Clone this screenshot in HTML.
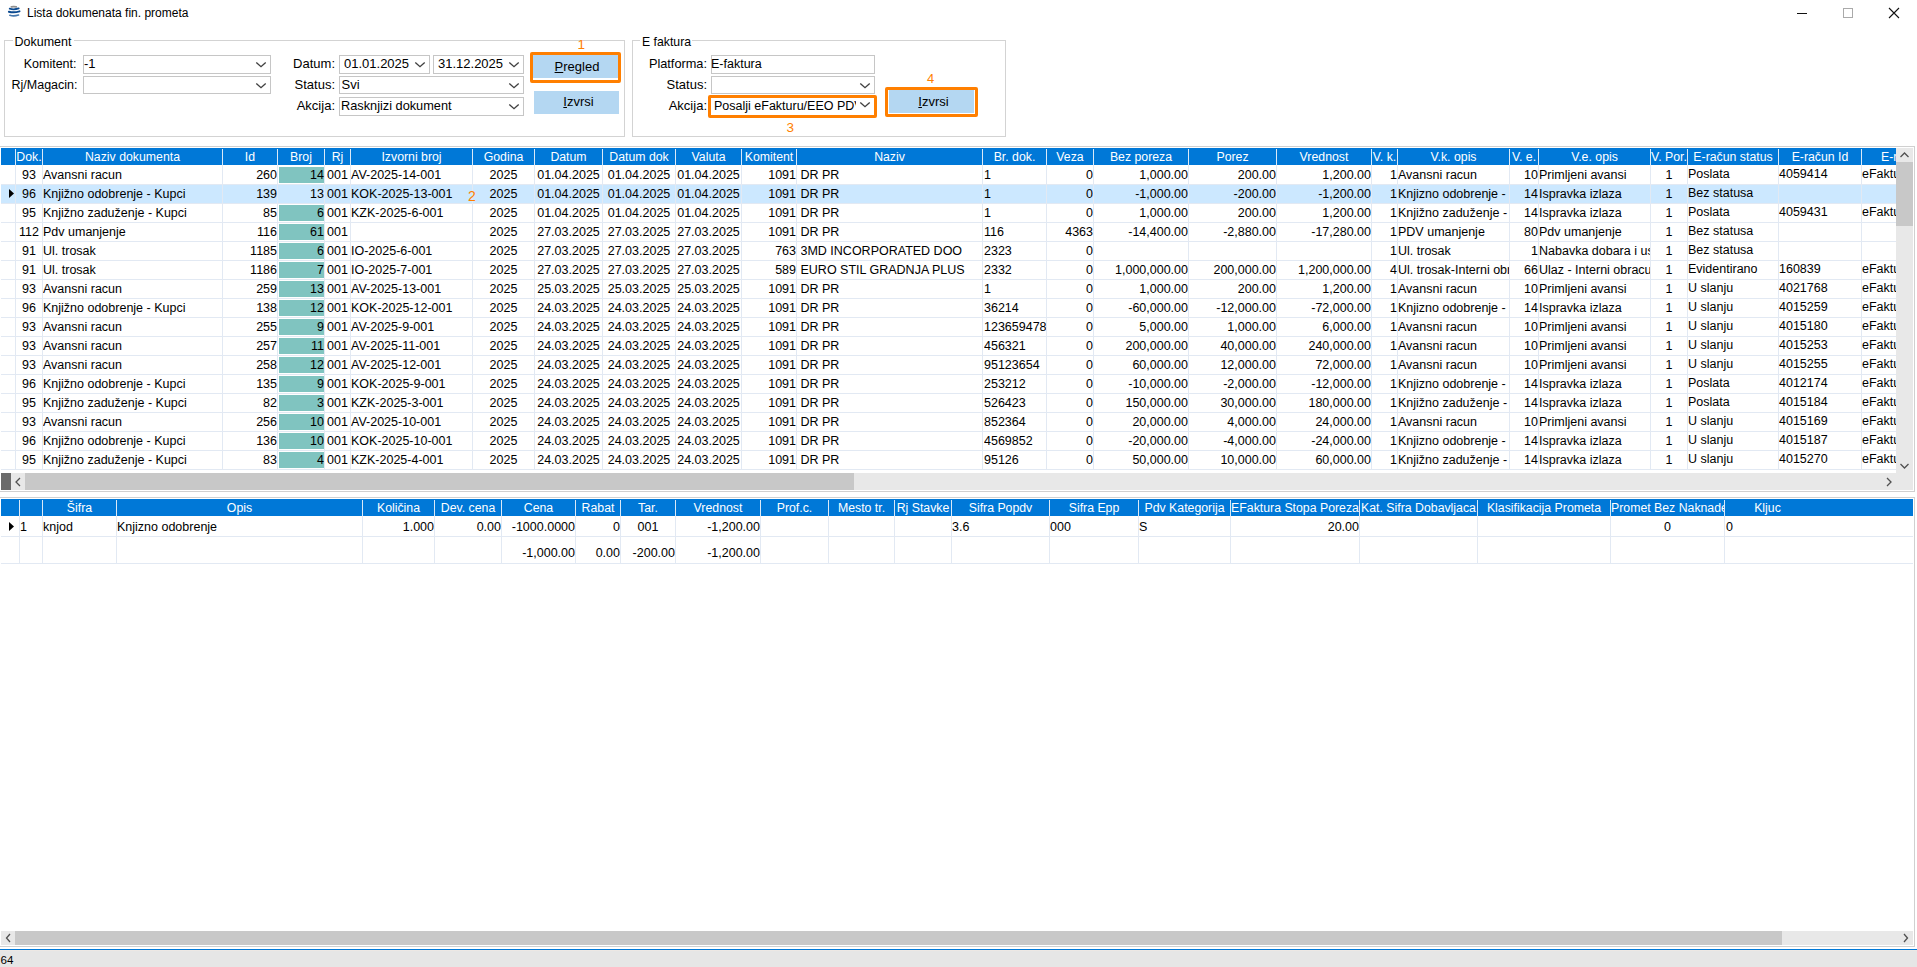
<!DOCTYPE html>
<html><head><meta charset="utf-8"><title>Lista dokumenata fin. prometa</title>
<style>
html,body{margin:0;padding:0;background:#fff;width:1917px;height:967px;overflow:hidden;}
body{position:relative;font-family:"Liberation Sans", sans-serif;font-size:12px;color:#000;}
body div, body svg{position:absolute;}
.t{white-space:nowrap;}
</style></head><body>
<svg style="left:7px;top:5px" width="14" height="14" viewBox="0 0 14 14"><path d="M4.3 1.9 Q6.7 1.4 9.3 1.9" stroke="#8f8f8f" stroke-width="1.6" fill="none" stroke-linecap="round"/><path d="M2.7 3.7 Q7 5.0 11.7 3.4" stroke="#0d4c92" stroke-width="1.8" fill="none" stroke-linecap="round"/><path d="M1.9 6.8 Q7 8.1 12.5 6.4" stroke="#0b4a90" stroke-width="2.0" fill="none" stroke-linecap="round"/><path d="M2.9 10.3 Q7 11.5 11.5 10.0" stroke="#4577ad" stroke-width="1.7" fill="none" stroke-linecap="round"/></svg>
<div class="t" style="left:27px;top:5.03px;font-size:12px;line-height:16px;color:#000;">Lista dokumenata fin. prometa</div>
<div style="left:1797px;top:13px;width:10px;height:1px;background:#111"></div>
<div style="left:1843px;top:8px;width:10px;height:10px;border:1px solid #aaa;box-sizing:border-box"></div>
<svg style="left:1888px;top:7px" width="12" height="12" viewBox="0 0 12 12"><path d="M1 1 L11 11 M11 1 L1 11" stroke="#111" stroke-width="1.1"/></svg>
<div style="left:4px;top:40px;width:621px;height:97px;border:1px solid #d3d3d3;box-sizing:border-box"></div>
<div style="left:12.5px;top:37px;width:61px;height:6px;background:#fff"></div>
<div class="t" style="left:14.5px;top:33.87px;font-size:12.5px;line-height:16px;color:#000;">Dokument</div>
<div style="left:632px;top:40px;width:374px;height:97px;border:1px solid #d3d3d3;box-sizing:border-box"></div>
<div style="left:640px;top:37px;width:52px;height:6px;background:#fff"></div>
<div class="t" style="left:642px;top:33.95px;font-size:12.25px;line-height:16px;color:#000;">E faktura</div>
<div class="t" style="left:-43.5px;top:55.87px;font-size:12.5px;line-height:16px;color:#000;width:120px;text-align:right;">Komitent:</div>
<div class="t" style="left:-42.5px;top:76.87px;font-size:12.5px;line-height:16px;color:#000;width:120px;text-align:right;">Rj/Magacin:</div>
<div style="left:83px;top:55px;width:188px;height:19px;border:1px solid #c6c6c6;box-sizing:border-box;background:#fff"></div>
<div class="t" style="left:84px;top:55.70px;font-size:13px;line-height:16px;color:#000;width:172px;overflow:hidden;white-space:nowrap">-1</div>
<svg style="left:255px;top:61px" width="12" height="8" viewBox="0 0 12 8"><path d="M1.3 1.4 L6 5.7 L10.7 1.4" fill="none" stroke="#404040" stroke-width="1.35"/></svg>
<div style="left:83px;top:76px;width:188px;height:18px;border:1px solid #c6c6c6;box-sizing:border-box;background:#fff"></div>
<svg style="left:255px;top:82px" width="12" height="8" viewBox="0 0 12 8"><path d="M1.3 1.4 L6 5.7 L10.7 1.4" fill="none" stroke="#404040" stroke-width="1.35"/></svg>
<div class="t" style="left:215px;top:55.70px;font-size:13px;line-height:16px;color:#000;width:120px;text-align:right;">Datum:</div>
<div class="t" style="left:215px;top:76.70px;font-size:13px;line-height:16px;color:#000;width:120px;text-align:right;">Status:</div>
<div class="t" style="left:215px;top:97.70px;font-size:13px;line-height:16px;color:#000;width:120px;text-align:right;">Akcija:</div>
<div style="left:339px;top:55px;width:91px;height:19px;border:1px solid #c6c6c6;box-sizing:border-box;background:#fff"></div>
<div class="t" style="left:344px;top:55.70px;font-size:13px;line-height:16px;color:#000;width:71px;overflow:hidden;white-space:nowrap">01.01.2025</div>
<svg style="left:414px;top:61px" width="12" height="8" viewBox="0 0 12 8"><path d="M1.3 1.4 L6 5.7 L10.7 1.4" fill="none" stroke="#404040" stroke-width="1.35"/></svg>
<div style="left:433px;top:55px;width:91px;height:19px;border:1px solid #c6c6c6;box-sizing:border-box;background:#fff"></div>
<div class="t" style="left:438px;top:55.70px;font-size:13px;line-height:16px;color:#000;width:71px;overflow:hidden;white-space:nowrap">31.12.2025</div>
<svg style="left:508px;top:61px" width="12" height="8" viewBox="0 0 12 8"><path d="M1.3 1.4 L6 5.7 L10.7 1.4" fill="none" stroke="#404040" stroke-width="1.35"/></svg>
<div style="left:339px;top:76px;width:185px;height:18px;border:1px solid #c6c6c6;box-sizing:border-box;background:#fff"></div>
<div class="t" style="left:341.5px;top:76.70px;font-size:13px;line-height:16px;color:#000;width:167.5px;overflow:hidden;white-space:nowrap">Svi</div>
<svg style="left:508px;top:82px" width="12" height="8" viewBox="0 0 12 8"><path d="M1.3 1.4 L6 5.7 L10.7 1.4" fill="none" stroke="#404040" stroke-width="1.35"/></svg>
<div style="left:339px;top:97px;width:185px;height:19px;border:1px solid #c6c6c6;box-sizing:border-box;background:#fff"></div>
<div class="t" style="left:341px;top:97.79px;font-size:12.75px;line-height:16px;color:#000;width:168px;overflow:hidden;white-space:nowrap">Rasknjizi dokument</div>
<svg style="left:508px;top:103px" width="12" height="8" viewBox="0 0 12 8"><path d="M1.3 1.4 L6 5.7 L10.7 1.4" fill="none" stroke="#404040" stroke-width="1.35"/></svg>
<div style="left:530px;top:52px;width:91px;height:31px;border:3px solid #ff7f00;border-radius:2px;box-sizing:border-box;background:#fff"></div>
<div style="left:533px;top:55px;width:85px;height:23px;background:#b4d7f2"></div>
<div class="t" style="left:534.5px;top:58.70px;font-size:13px;line-height:16px;color:#000;width:85px;text-align:center;"><u>P</u>regled</div>
<div class="t" style="left:577.5px;top:36.54px;font-size:13.5px;line-height:16px;color:#ff7f00;">1</div>
<div style="left:534px;top:91px;width:85px;height:23px;background:#b4d7f2"></div>
<div class="t" style="left:536px;top:93.70px;font-size:13px;line-height:16px;color:#000;width:85px;text-align:center;"><u>I</u>zvrsi</div>
<div class="t" style="left:587px;top:55.79px;font-size:12.75px;line-height:16px;color:#000;width:120px;text-align:right;">Platforma:</div>
<div class="t" style="left:587px;top:76.70px;font-size:13px;line-height:16px;color:#000;width:120px;text-align:right;">Status:</div>
<div class="t" style="left:587px;top:97.70px;font-size:13px;line-height:16px;color:#000;width:120px;text-align:right;">Akcija:</div>
<div style="left:711px;top:55px;width:164px;height:19px;border:1px solid #c6c6c6;box-sizing:border-box;background:#fff"></div>
<div class="t" style="left:711px;top:55.87px;font-size:12.5px;line-height:16px;color:#000;width:149px;overflow:hidden;white-space:nowrap">E-faktura</div>
<div style="left:711px;top:76px;width:164px;height:18px;border:1px solid #c6c6c6;box-sizing:border-box;background:#fff"></div>
<svg style="left:859px;top:82px" width="12" height="8" viewBox="0 0 12 8"><path d="M1.3 1.4 L6 5.7 L10.7 1.4" fill="none" stroke="#404040" stroke-width="1.35"/></svg>
<div style="left:708px;top:95px;width:169px;height:23px;border:3px solid #ff7f00;border-radius:2px;box-sizing:border-box;background:#fff"></div>
<div class="t" style="left:714px;top:97.87px;font-size:12.5px;line-height:16px;color:#000;width:142px;overflow:hidden;white-space:nowrap">Posalji eFakturu/EEO PDV</div>
<svg style="left:859px;top:101px" width="12" height="8" viewBox="0 0 12 8"><path d="M1.3 1.4 L6 5.7 L10.7 1.4" fill="none" stroke="#404040" stroke-width="1.35"/></svg>
<div class="t" style="left:786.5px;top:119.54px;font-size:13.5px;line-height:16px;color:#ff7f00;">3</div>
<div style="left:885px;top:87px;width:93px;height:30px;border:3px solid #ff7f00;border-radius:2px;box-sizing:border-box;background:#fff"></div>
<div style="left:889px;top:90px;width:85px;height:23px;background:#b4d7f2"></div>
<div class="t" style="left:891px;top:93.70px;font-size:13px;line-height:16px;color:#000;width:85px;text-align:center;"><u>I</u>zvrsi</div>
<div class="t" style="left:927px;top:70.70px;font-size:13px;line-height:16px;color:#ff7f00;">4</div>
<div style="left:0px;top:146px;width:1915px;height:1px;background:#d0d0d0"></div>
<div style="left:1914px;top:146px;width:1px;height:346px;background:#d0d0d0"></div>
<div style="left:0px;top:491px;width:1915px;height:1px;background:#d0d0d0"></div>
<div style="left:1px;top:148px;width:1895px;height:322px;overflow:hidden">
<div style="left:0px;top:0px;width:1960px;height:17px;background:#0078d7"></div>
<div style="left:14px;top:1px;width:1px;height:16px;background:#dbe9f7"></div>
<div style="left:41px;top:1px;width:1px;height:16px;background:#dbe9f7"></div>
<div style="left:221px;top:1px;width:1px;height:16px;background:#dbe9f7"></div>
<div style="left:276px;top:1px;width:1px;height:16px;background:#dbe9f7"></div>
<div style="left:323px;top:1px;width:1px;height:16px;background:#dbe9f7"></div>
<div style="left:349px;top:1px;width:1px;height:16px;background:#dbe9f7"></div>
<div style="left:471px;top:1px;width:1px;height:16px;background:#dbe9f7"></div>
<div style="left:533px;top:1px;width:1px;height:16px;background:#dbe9f7"></div>
<div style="left:601px;top:1px;width:1px;height:16px;background:#dbe9f7"></div>
<div style="left:674px;top:1px;width:1px;height:16px;background:#dbe9f7"></div>
<div style="left:740px;top:1px;width:1px;height:16px;background:#dbe9f7"></div>
<div style="left:795px;top:1px;width:1px;height:16px;background:#dbe9f7"></div>
<div style="left:981px;top:1px;width:1px;height:16px;background:#dbe9f7"></div>
<div style="left:1045px;top:1px;width:1px;height:16px;background:#dbe9f7"></div>
<div style="left:1092px;top:1px;width:1px;height:16px;background:#dbe9f7"></div>
<div style="left:1187px;top:1px;width:1px;height:16px;background:#dbe9f7"></div>
<div style="left:1275px;top:1px;width:1px;height:16px;background:#dbe9f7"></div>
<div style="left:1370px;top:1px;width:1px;height:16px;background:#dbe9f7"></div>
<div style="left:1396px;top:1px;width:1px;height:16px;background:#dbe9f7"></div>
<div style="left:1508px;top:1px;width:1px;height:16px;background:#dbe9f7"></div>
<div style="left:1537px;top:1px;width:1px;height:16px;background:#dbe9f7"></div>
<div style="left:1649px;top:1px;width:1px;height:16px;background:#dbe9f7"></div>
<div style="left:1686px;top:1px;width:1px;height:16px;background:#dbe9f7"></div>
<div style="left:1777px;top:1px;width:1px;height:16px;background:#dbe9f7"></div>
<div style="left:1860px;top:1px;width:1px;height:16px;background:#dbe9f7"></div>
<div class="t" style="left:15px;top:0.93px;width:26px;font-size:12.3px;line-height:16px;color:#fff;text-align:center;overflow:hidden;white-space:nowrap;">Dok.</div>
<div class="t" style="left:42px;top:0.93px;width:179px;font-size:12.3px;line-height:16px;color:#fff;text-align:center;overflow:hidden;white-space:nowrap;">Naziv dokumenta</div>
<div class="t" style="left:222px;top:0.93px;width:54px;font-size:12.3px;line-height:16px;color:#fff;text-align:center;overflow:hidden;white-space:nowrap;">Id</div>
<div class="t" style="left:277px;top:0.93px;width:46px;font-size:12.3px;line-height:16px;color:#fff;text-align:center;overflow:hidden;white-space:nowrap;">Broj</div>
<div class="t" style="left:324px;top:0.93px;width:25px;font-size:12.3px;line-height:16px;color:#fff;text-align:center;overflow:hidden;white-space:nowrap;">Rj</div>
<div class="t" style="left:350px;top:0.93px;width:121px;font-size:12.3px;line-height:16px;color:#fff;text-align:center;overflow:hidden;white-space:nowrap;">Izvorni broj</div>
<div class="t" style="left:472px;top:0.93px;width:61px;font-size:12.3px;line-height:16px;color:#fff;text-align:center;overflow:hidden;white-space:nowrap;">Godina</div>
<div class="t" style="left:534px;top:0.93px;width:67px;font-size:12.3px;line-height:16px;color:#fff;text-align:center;overflow:hidden;white-space:nowrap;">Datum</div>
<div class="t" style="left:602px;top:0.93px;width:72px;font-size:12.3px;line-height:16px;color:#fff;text-align:center;overflow:hidden;white-space:nowrap;">Datum dok</div>
<div class="t" style="left:675px;top:0.93px;width:65px;font-size:12.3px;line-height:16px;color:#fff;text-align:center;overflow:hidden;white-space:nowrap;">Valuta</div>
<div class="t" style="left:741px;top:0.93px;width:54px;font-size:12.3px;line-height:16px;color:#fff;text-align:center;overflow:hidden;white-space:nowrap;">Komitent</div>
<div class="t" style="left:796px;top:0.93px;width:185px;font-size:12.3px;line-height:16px;color:#fff;text-align:center;overflow:hidden;white-space:nowrap;">Naziv</div>
<div class="t" style="left:982px;top:0.93px;width:63px;font-size:12.3px;line-height:16px;color:#fff;text-align:center;overflow:hidden;white-space:nowrap;">Br. dok.</div>
<div class="t" style="left:1046px;top:0.93px;width:46px;font-size:12.3px;line-height:16px;color:#fff;text-align:center;overflow:hidden;white-space:nowrap;">Veza</div>
<div class="t" style="left:1093px;top:0.93px;width:94px;font-size:12.3px;line-height:16px;color:#fff;text-align:center;overflow:hidden;white-space:nowrap;">Bez poreza</div>
<div class="t" style="left:1188px;top:0.93px;width:87px;font-size:12.3px;line-height:16px;color:#fff;text-align:center;overflow:hidden;white-space:nowrap;">Porez</div>
<div class="t" style="left:1276px;top:0.93px;width:94px;font-size:12.3px;line-height:16px;color:#fff;text-align:center;overflow:hidden;white-space:nowrap;">Vrednost</div>
<div class="t" style="left:1371px;top:0.93px;width:25px;font-size:12.3px;line-height:16px;color:#fff;text-align:center;overflow:hidden;white-space:nowrap;">V. k.</div>
<div class="t" style="left:1397px;top:0.93px;width:111px;font-size:12.3px;line-height:16px;color:#fff;text-align:center;overflow:hidden;white-space:nowrap;">V.k. opis</div>
<div class="t" style="left:1509px;top:0.93px;width:28px;font-size:12.3px;line-height:16px;color:#fff;text-align:center;overflow:hidden;white-space:nowrap;">V. e.</div>
<div class="t" style="left:1538px;top:0.93px;width:111px;font-size:12.3px;line-height:16px;color:#fff;text-align:center;overflow:hidden;white-space:nowrap;">V.e. opis</div>
<div class="t" style="left:1650px;top:0.93px;width:36px;font-size:12.3px;line-height:16px;color:#fff;text-align:center;overflow:hidden;white-space:nowrap;">V. Por.</div>
<div class="t" style="left:1687px;top:0.93px;width:90px;font-size:12.3px;line-height:16px;color:#fff;text-align:center;overflow:hidden;white-space:nowrap;">E-račun status</div>
<div class="t" style="left:1778px;top:0.93px;width:82px;font-size:12.3px;line-height:16px;color:#fff;text-align:center;overflow:hidden;white-space:nowrap;">E-račun Id</div>
<div class="t" style="left:1880px;top:0.93px;width:200px;font-size:12.3px;line-height:16px;color:#fff;text-align:left;overflow:hidden;white-space:nowrap;">E-račun tip</div>
<div style="left:0px;top:36px;width:1960px;height:1px;background:#e2e9f3"></div>
<div class="t" style="left:15px;top:18.87px;width:26px;font-size:12.5px;line-height:16px;color:#000;text-align:center;overflow:hidden;white-space:nowrap;">93</div>
<div class="t" style="left:42px;top:18.87px;width:179px;font-size:12.5px;line-height:16px;color:#000;text-align:left;overflow:hidden;white-space:nowrap;">Avansni racun</div>
<div class="t" style="left:222px;top:18.87px;width:54px;font-size:12.5px;line-height:16px;color:#000;text-align:right;overflow:hidden;white-space:nowrap;">260</div>
<div style="left:278px;top:19px;width:45px;height:16px;background:#80c4c0"></div>
<div class="t" style="left:277px;top:18.87px;width:46px;font-size:12.5px;line-height:16px;color:#000;text-align:right;overflow:hidden;white-space:nowrap;">14</div>
<div class="t" style="left:324px;top:18.87px;width:25px;font-size:12.5px;line-height:16px;color:#000;text-align:center;overflow:hidden;white-space:nowrap;">001</div>
<div class="t" style="left:350px;top:18.87px;width:121px;font-size:12.5px;line-height:16px;color:#000;text-align:left;overflow:hidden;white-space:nowrap;">AV-2025-14-001</div>
<div class="t" style="left:472px;top:18.87px;width:61px;font-size:12.5px;line-height:16px;color:#000;text-align:center;overflow:hidden;white-space:nowrap;">2025</div>
<div class="t" style="left:534px;top:18.87px;width:67px;font-size:12.5px;line-height:16px;color:#000;text-align:center;overflow:hidden;white-space:nowrap;">01.04.2025</div>
<div class="t" style="left:602px;top:18.87px;width:72px;font-size:12.5px;line-height:16px;color:#000;text-align:center;overflow:hidden;white-space:nowrap;">01.04.2025</div>
<div class="t" style="left:675px;top:18.87px;width:65px;font-size:12.5px;line-height:16px;color:#000;text-align:center;overflow:hidden;white-space:nowrap;">01.04.2025</div>
<div class="t" style="left:741px;top:18.87px;width:54px;font-size:12.5px;line-height:16px;color:#000;text-align:right;overflow:hidden;white-space:nowrap;">1091</div>
<div class="t" style="left:799.5px;top:18.87px;width:181.5px;font-size:12.5px;line-height:16px;color:#000;text-align:left;overflow:hidden;white-space:nowrap;">DR PR</div>
<div class="t" style="left:983px;top:18.87px;width:62px;font-size:12.5px;line-height:16px;color:#000;text-align:left;overflow:hidden;white-space:nowrap;">1</div>
<div class="t" style="left:1046px;top:18.87px;width:46px;font-size:12.5px;line-height:16px;color:#000;text-align:right;overflow:hidden;white-space:nowrap;">0</div>
<div class="t" style="left:1093px;top:18.87px;width:94px;font-size:12.5px;line-height:16px;color:#000;text-align:right;overflow:hidden;white-space:nowrap;">1,000.00</div>
<div class="t" style="left:1188px;top:18.87px;width:87px;font-size:12.5px;line-height:16px;color:#000;text-align:right;overflow:hidden;white-space:nowrap;">200.00</div>
<div class="t" style="left:1276px;top:18.87px;width:94px;font-size:12.5px;line-height:16px;color:#000;text-align:right;overflow:hidden;white-space:nowrap;">1,200.00</div>
<div class="t" style="left:1371px;top:18.87px;width:25px;font-size:12.5px;line-height:16px;color:#000;text-align:right;overflow:hidden;white-space:nowrap;">1</div>
<div class="t" style="left:1397px;top:18.87px;width:111px;font-size:12.5px;line-height:16px;color:#000;text-align:left;overflow:hidden;white-space:nowrap;">Avansni racun</div>
<div class="t" style="left:1509px;top:18.87px;width:28px;font-size:12.5px;line-height:16px;color:#000;text-align:right;overflow:hidden;white-space:nowrap;">10</div>
<div class="t" style="left:1538px;top:18.87px;width:111px;font-size:12.5px;line-height:16px;color:#000;text-align:left;overflow:hidden;white-space:nowrap;">Primljeni avansi</div>
<div class="t" style="left:1650px;top:18.87px;width:36px;font-size:12.5px;line-height:16px;color:#000;text-align:center;overflow:hidden;white-space:nowrap;">1</div>
<div class="t" style="left:1687px;top:17.87px;width:90px;font-size:12.5px;line-height:16px;color:#000;text-align:left;overflow:hidden;white-space:nowrap;">Poslata</div>
<div class="t" style="left:1778px;top:17.87px;width:82px;font-size:12.5px;line-height:16px;color:#000;text-align:left;overflow:hidden;white-space:nowrap;">4059414</div>
<div class="t" style="left:1861px;top:17.87px;width:98px;font-size:12.5px;line-height:16px;color:#000;text-align:left;overflow:hidden;white-space:nowrap;">eFaktura</div>
<div style="left:0px;top:37px;width:1960px;height:18px;background:#cce8ff"></div>
<div style="left:0px;top:55px;width:1960px;height:1px;background:#e2e9f3"></div>
<div class="t" style="left:15px;top:37.87px;width:26px;font-size:12.5px;line-height:16px;color:#000;text-align:center;overflow:hidden;white-space:nowrap;">96</div>
<div class="t" style="left:42px;top:37.87px;width:179px;font-size:12.5px;line-height:16px;color:#000;text-align:left;overflow:hidden;white-space:nowrap;">Knjižno odobrenje - Kupci</div>
<div class="t" style="left:222px;top:37.87px;width:54px;font-size:12.5px;line-height:16px;color:#000;text-align:right;overflow:hidden;white-space:nowrap;">139</div>
<div class="t" style="left:277px;top:37.87px;width:46px;font-size:12.5px;line-height:16px;color:#000;text-align:right;overflow:hidden;white-space:nowrap;">13</div>
<div class="t" style="left:324px;top:37.87px;width:25px;font-size:12.5px;line-height:16px;color:#000;text-align:center;overflow:hidden;white-space:nowrap;">001</div>
<div class="t" style="left:350px;top:37.87px;width:121px;font-size:12.5px;line-height:16px;color:#000;text-align:left;overflow:hidden;white-space:nowrap;">KOK-2025-13-001</div>
<div class="t" style="left:472px;top:37.87px;width:61px;font-size:12.5px;line-height:16px;color:#000;text-align:center;overflow:hidden;white-space:nowrap;">2025</div>
<div class="t" style="left:534px;top:37.87px;width:67px;font-size:12.5px;line-height:16px;color:#000;text-align:center;overflow:hidden;white-space:nowrap;">01.04.2025</div>
<div class="t" style="left:602px;top:37.87px;width:72px;font-size:12.5px;line-height:16px;color:#000;text-align:center;overflow:hidden;white-space:nowrap;">01.04.2025</div>
<div class="t" style="left:675px;top:37.87px;width:65px;font-size:12.5px;line-height:16px;color:#000;text-align:center;overflow:hidden;white-space:nowrap;">01.04.2025</div>
<div class="t" style="left:741px;top:37.87px;width:54px;font-size:12.5px;line-height:16px;color:#000;text-align:right;overflow:hidden;white-space:nowrap;">1091</div>
<div class="t" style="left:799.5px;top:37.87px;width:181.5px;font-size:12.5px;line-height:16px;color:#000;text-align:left;overflow:hidden;white-space:nowrap;">DR PR</div>
<div class="t" style="left:983px;top:37.87px;width:62px;font-size:12.5px;line-height:16px;color:#000;text-align:left;overflow:hidden;white-space:nowrap;">1</div>
<div class="t" style="left:1046px;top:37.87px;width:46px;font-size:12.5px;line-height:16px;color:#000;text-align:right;overflow:hidden;white-space:nowrap;">0</div>
<div class="t" style="left:1093px;top:37.87px;width:94px;font-size:12.5px;line-height:16px;color:#000;text-align:right;overflow:hidden;white-space:nowrap;">-1,000.00</div>
<div class="t" style="left:1188px;top:37.87px;width:87px;font-size:12.5px;line-height:16px;color:#000;text-align:right;overflow:hidden;white-space:nowrap;">-200.00</div>
<div class="t" style="left:1276px;top:37.87px;width:94px;font-size:12.5px;line-height:16px;color:#000;text-align:right;overflow:hidden;white-space:nowrap;">-1,200.00</div>
<div class="t" style="left:1371px;top:37.87px;width:25px;font-size:12.5px;line-height:16px;color:#000;text-align:right;overflow:hidden;white-space:nowrap;">1</div>
<div class="t" style="left:1397px;top:37.87px;width:111px;font-size:12.5px;line-height:16px;color:#000;text-align:left;overflow:hidden;white-space:nowrap;">Knjizno odobrenje - Kupci</div>
<div class="t" style="left:1509px;top:37.87px;width:28px;font-size:12.5px;line-height:16px;color:#000;text-align:right;overflow:hidden;white-space:nowrap;">14</div>
<div class="t" style="left:1538px;top:37.87px;width:111px;font-size:12.5px;line-height:16px;color:#000;text-align:left;overflow:hidden;white-space:nowrap;">Ispravka izlaza</div>
<div class="t" style="left:1650px;top:37.87px;width:36px;font-size:12.5px;line-height:16px;color:#000;text-align:center;overflow:hidden;white-space:nowrap;">1</div>
<div class="t" style="left:1687px;top:36.87px;width:90px;font-size:12.5px;line-height:16px;color:#000;text-align:left;overflow:hidden;white-space:nowrap;">Bez statusa</div>
<svg style="left:8px;top:41px" width="6" height="10" viewBox="0 0 6 10"><path d="M0 0 L5 4.5 L0 9 Z" fill="#000"/></svg>
<div style="left:0px;top:74px;width:1960px;height:1px;background:#e2e9f3"></div>
<div class="t" style="left:15px;top:56.87px;width:26px;font-size:12.5px;line-height:16px;color:#000;text-align:center;overflow:hidden;white-space:nowrap;">95</div>
<div class="t" style="left:42px;top:56.87px;width:179px;font-size:12.5px;line-height:16px;color:#000;text-align:left;overflow:hidden;white-space:nowrap;">Knjižno zaduženje - Kupci</div>
<div class="t" style="left:222px;top:56.87px;width:54px;font-size:12.5px;line-height:16px;color:#000;text-align:right;overflow:hidden;white-space:nowrap;">85</div>
<div style="left:278px;top:57px;width:45px;height:16px;background:#80c4c0"></div>
<div class="t" style="left:277px;top:56.87px;width:46px;font-size:12.5px;line-height:16px;color:#000;text-align:right;overflow:hidden;white-space:nowrap;">6</div>
<div class="t" style="left:324px;top:56.87px;width:25px;font-size:12.5px;line-height:16px;color:#000;text-align:center;overflow:hidden;white-space:nowrap;">001</div>
<div class="t" style="left:350px;top:56.87px;width:121px;font-size:12.5px;line-height:16px;color:#000;text-align:left;overflow:hidden;white-space:nowrap;">KZK-2025-6-001</div>
<div class="t" style="left:472px;top:56.87px;width:61px;font-size:12.5px;line-height:16px;color:#000;text-align:center;overflow:hidden;white-space:nowrap;">2025</div>
<div class="t" style="left:534px;top:56.87px;width:67px;font-size:12.5px;line-height:16px;color:#000;text-align:center;overflow:hidden;white-space:nowrap;">01.04.2025</div>
<div class="t" style="left:602px;top:56.87px;width:72px;font-size:12.5px;line-height:16px;color:#000;text-align:center;overflow:hidden;white-space:nowrap;">01.04.2025</div>
<div class="t" style="left:675px;top:56.87px;width:65px;font-size:12.5px;line-height:16px;color:#000;text-align:center;overflow:hidden;white-space:nowrap;">01.04.2025</div>
<div class="t" style="left:741px;top:56.87px;width:54px;font-size:12.5px;line-height:16px;color:#000;text-align:right;overflow:hidden;white-space:nowrap;">1091</div>
<div class="t" style="left:799.5px;top:56.87px;width:181.5px;font-size:12.5px;line-height:16px;color:#000;text-align:left;overflow:hidden;white-space:nowrap;">DR PR</div>
<div class="t" style="left:983px;top:56.87px;width:62px;font-size:12.5px;line-height:16px;color:#000;text-align:left;overflow:hidden;white-space:nowrap;">1</div>
<div class="t" style="left:1046px;top:56.87px;width:46px;font-size:12.5px;line-height:16px;color:#000;text-align:right;overflow:hidden;white-space:nowrap;">0</div>
<div class="t" style="left:1093px;top:56.87px;width:94px;font-size:12.5px;line-height:16px;color:#000;text-align:right;overflow:hidden;white-space:nowrap;">1,000.00</div>
<div class="t" style="left:1188px;top:56.87px;width:87px;font-size:12.5px;line-height:16px;color:#000;text-align:right;overflow:hidden;white-space:nowrap;">200.00</div>
<div class="t" style="left:1276px;top:56.87px;width:94px;font-size:12.5px;line-height:16px;color:#000;text-align:right;overflow:hidden;white-space:nowrap;">1,200.00</div>
<div class="t" style="left:1371px;top:56.87px;width:25px;font-size:12.5px;line-height:16px;color:#000;text-align:right;overflow:hidden;white-space:nowrap;">1</div>
<div class="t" style="left:1397px;top:56.87px;width:111px;font-size:12.5px;line-height:16px;color:#000;text-align:left;overflow:hidden;white-space:nowrap;">Knjižno zaduženje - Kupci</div>
<div class="t" style="left:1509px;top:56.87px;width:28px;font-size:12.5px;line-height:16px;color:#000;text-align:right;overflow:hidden;white-space:nowrap;">14</div>
<div class="t" style="left:1538px;top:56.87px;width:111px;font-size:12.5px;line-height:16px;color:#000;text-align:left;overflow:hidden;white-space:nowrap;">Ispravka izlaza</div>
<div class="t" style="left:1650px;top:56.87px;width:36px;font-size:12.5px;line-height:16px;color:#000;text-align:center;overflow:hidden;white-space:nowrap;">1</div>
<div class="t" style="left:1687px;top:55.87px;width:90px;font-size:12.5px;line-height:16px;color:#000;text-align:left;overflow:hidden;white-space:nowrap;">Poslata</div>
<div class="t" style="left:1778px;top:55.87px;width:82px;font-size:12.5px;line-height:16px;color:#000;text-align:left;overflow:hidden;white-space:nowrap;">4059431</div>
<div class="t" style="left:1861px;top:55.87px;width:98px;font-size:12.5px;line-height:16px;color:#000;text-align:left;overflow:hidden;white-space:nowrap;">eFaktura</div>
<div style="left:0px;top:93px;width:1960px;height:1px;background:#e2e9f3"></div>
<div class="t" style="left:15px;top:75.87px;width:26px;font-size:12.5px;line-height:16px;color:#000;text-align:center;overflow:hidden;white-space:nowrap;">112</div>
<div class="t" style="left:42px;top:75.87px;width:179px;font-size:12.5px;line-height:16px;color:#000;text-align:left;overflow:hidden;white-space:nowrap;">Pdv umanjenje</div>
<div class="t" style="left:222px;top:75.87px;width:54px;font-size:12.5px;line-height:16px;color:#000;text-align:right;overflow:hidden;white-space:nowrap;">116</div>
<div style="left:278px;top:76px;width:45px;height:16px;background:#80c4c0"></div>
<div class="t" style="left:277px;top:75.87px;width:46px;font-size:12.5px;line-height:16px;color:#000;text-align:right;overflow:hidden;white-space:nowrap;">61</div>
<div class="t" style="left:324px;top:75.87px;width:25px;font-size:12.5px;line-height:16px;color:#000;text-align:center;overflow:hidden;white-space:nowrap;">001</div>
<div class="t" style="left:472px;top:75.87px;width:61px;font-size:12.5px;line-height:16px;color:#000;text-align:center;overflow:hidden;white-space:nowrap;">2025</div>
<div class="t" style="left:534px;top:75.87px;width:67px;font-size:12.5px;line-height:16px;color:#000;text-align:center;overflow:hidden;white-space:nowrap;">27.03.2025</div>
<div class="t" style="left:602px;top:75.87px;width:72px;font-size:12.5px;line-height:16px;color:#000;text-align:center;overflow:hidden;white-space:nowrap;">27.03.2025</div>
<div class="t" style="left:675px;top:75.87px;width:65px;font-size:12.5px;line-height:16px;color:#000;text-align:center;overflow:hidden;white-space:nowrap;">27.03.2025</div>
<div class="t" style="left:741px;top:75.87px;width:54px;font-size:12.5px;line-height:16px;color:#000;text-align:right;overflow:hidden;white-space:nowrap;">1091</div>
<div class="t" style="left:799.5px;top:75.87px;width:181.5px;font-size:12.5px;line-height:16px;color:#000;text-align:left;overflow:hidden;white-space:nowrap;">DR PR</div>
<div class="t" style="left:983px;top:75.87px;width:62px;font-size:12.5px;line-height:16px;color:#000;text-align:left;overflow:hidden;white-space:nowrap;">116</div>
<div class="t" style="left:1046px;top:75.87px;width:46px;font-size:12.5px;line-height:16px;color:#000;text-align:right;overflow:hidden;white-space:nowrap;">4363</div>
<div class="t" style="left:1093px;top:75.87px;width:94px;font-size:12.5px;line-height:16px;color:#000;text-align:right;overflow:hidden;white-space:nowrap;">-14,400.00</div>
<div class="t" style="left:1188px;top:75.87px;width:87px;font-size:12.5px;line-height:16px;color:#000;text-align:right;overflow:hidden;white-space:nowrap;">-2,880.00</div>
<div class="t" style="left:1276px;top:75.87px;width:94px;font-size:12.5px;line-height:16px;color:#000;text-align:right;overflow:hidden;white-space:nowrap;">-17,280.00</div>
<div class="t" style="left:1371px;top:75.87px;width:25px;font-size:12.5px;line-height:16px;color:#000;text-align:right;overflow:hidden;white-space:nowrap;">1</div>
<div class="t" style="left:1397px;top:75.87px;width:111px;font-size:12.5px;line-height:16px;color:#000;text-align:left;overflow:hidden;white-space:nowrap;">PDV umanjenje</div>
<div class="t" style="left:1509px;top:75.87px;width:28px;font-size:12.5px;line-height:16px;color:#000;text-align:right;overflow:hidden;white-space:nowrap;">80</div>
<div class="t" style="left:1538px;top:75.87px;width:111px;font-size:12.5px;line-height:16px;color:#000;text-align:left;overflow:hidden;white-space:nowrap;">Pdv umanjenje</div>
<div class="t" style="left:1650px;top:75.87px;width:36px;font-size:12.5px;line-height:16px;color:#000;text-align:center;overflow:hidden;white-space:nowrap;">1</div>
<div class="t" style="left:1687px;top:74.87px;width:90px;font-size:12.5px;line-height:16px;color:#000;text-align:left;overflow:hidden;white-space:nowrap;">Bez statusa</div>
<div style="left:0px;top:112px;width:1960px;height:1px;background:#e2e9f3"></div>
<div class="t" style="left:15px;top:94.87px;width:26px;font-size:12.5px;line-height:16px;color:#000;text-align:center;overflow:hidden;white-space:nowrap;">91</div>
<div class="t" style="left:42px;top:94.87px;width:179px;font-size:12.5px;line-height:16px;color:#000;text-align:left;overflow:hidden;white-space:nowrap;">Ul. trosak</div>
<div class="t" style="left:222px;top:94.87px;width:54px;font-size:12.5px;line-height:16px;color:#000;text-align:right;overflow:hidden;white-space:nowrap;">1185</div>
<div style="left:278px;top:95px;width:45px;height:16px;background:#80c4c0"></div>
<div class="t" style="left:277px;top:94.87px;width:46px;font-size:12.5px;line-height:16px;color:#000;text-align:right;overflow:hidden;white-space:nowrap;">6</div>
<div class="t" style="left:324px;top:94.87px;width:25px;font-size:12.5px;line-height:16px;color:#000;text-align:center;overflow:hidden;white-space:nowrap;">001</div>
<div class="t" style="left:350px;top:94.87px;width:121px;font-size:12.5px;line-height:16px;color:#000;text-align:left;overflow:hidden;white-space:nowrap;">IO-2025-6-001</div>
<div class="t" style="left:472px;top:94.87px;width:61px;font-size:12.5px;line-height:16px;color:#000;text-align:center;overflow:hidden;white-space:nowrap;">2025</div>
<div class="t" style="left:534px;top:94.87px;width:67px;font-size:12.5px;line-height:16px;color:#000;text-align:center;overflow:hidden;white-space:nowrap;">27.03.2025</div>
<div class="t" style="left:602px;top:94.87px;width:72px;font-size:12.5px;line-height:16px;color:#000;text-align:center;overflow:hidden;white-space:nowrap;">27.03.2025</div>
<div class="t" style="left:675px;top:94.87px;width:65px;font-size:12.5px;line-height:16px;color:#000;text-align:center;overflow:hidden;white-space:nowrap;">27.03.2025</div>
<div class="t" style="left:741px;top:94.87px;width:54px;font-size:12.5px;line-height:16px;color:#000;text-align:right;overflow:hidden;white-space:nowrap;">763</div>
<div class="t" style="left:799.5px;top:94.87px;width:181.5px;font-size:12.5px;line-height:16px;color:#000;text-align:left;overflow:hidden;white-space:nowrap;">3MD INCORPORATED DOO</div>
<div class="t" style="left:983px;top:94.87px;width:62px;font-size:12.5px;line-height:16px;color:#000;text-align:left;overflow:hidden;white-space:nowrap;">2323</div>
<div class="t" style="left:1046px;top:94.87px;width:46px;font-size:12.5px;line-height:16px;color:#000;text-align:right;overflow:hidden;white-space:nowrap;">0</div>
<div class="t" style="left:1371px;top:94.87px;width:25px;font-size:12.5px;line-height:16px;color:#000;text-align:right;overflow:hidden;white-space:nowrap;">1</div>
<div class="t" style="left:1397px;top:94.87px;width:111px;font-size:12.5px;line-height:16px;color:#000;text-align:left;overflow:hidden;white-space:nowrap;">Ul. trosak</div>
<div class="t" style="left:1509px;top:94.87px;width:28px;font-size:12.5px;line-height:16px;color:#000;text-align:right;overflow:hidden;white-space:nowrap;">1</div>
<div class="t" style="left:1538px;top:94.87px;width:111px;font-size:12.5px;line-height:16px;color:#000;text-align:left;overflow:hidden;white-space:nowrap;">Nabavka dobara i usluga</div>
<div class="t" style="left:1650px;top:94.87px;width:36px;font-size:12.5px;line-height:16px;color:#000;text-align:center;overflow:hidden;white-space:nowrap;">1</div>
<div class="t" style="left:1687px;top:93.87px;width:90px;font-size:12.5px;line-height:16px;color:#000;text-align:left;overflow:hidden;white-space:nowrap;">Bez statusa</div>
<div style="left:0px;top:131px;width:1960px;height:1px;background:#e2e9f3"></div>
<div class="t" style="left:15px;top:113.87px;width:26px;font-size:12.5px;line-height:16px;color:#000;text-align:center;overflow:hidden;white-space:nowrap;">91</div>
<div class="t" style="left:42px;top:113.87px;width:179px;font-size:12.5px;line-height:16px;color:#000;text-align:left;overflow:hidden;white-space:nowrap;">Ul. trosak</div>
<div class="t" style="left:222px;top:113.87px;width:54px;font-size:12.5px;line-height:16px;color:#000;text-align:right;overflow:hidden;white-space:nowrap;">1186</div>
<div style="left:278px;top:114px;width:45px;height:16px;background:#80c4c0"></div>
<div class="t" style="left:277px;top:113.87px;width:46px;font-size:12.5px;line-height:16px;color:#000;text-align:right;overflow:hidden;white-space:nowrap;">7</div>
<div class="t" style="left:324px;top:113.87px;width:25px;font-size:12.5px;line-height:16px;color:#000;text-align:center;overflow:hidden;white-space:nowrap;">001</div>
<div class="t" style="left:350px;top:113.87px;width:121px;font-size:12.5px;line-height:16px;color:#000;text-align:left;overflow:hidden;white-space:nowrap;">IO-2025-7-001</div>
<div class="t" style="left:472px;top:113.87px;width:61px;font-size:12.5px;line-height:16px;color:#000;text-align:center;overflow:hidden;white-space:nowrap;">2025</div>
<div class="t" style="left:534px;top:113.87px;width:67px;font-size:12.5px;line-height:16px;color:#000;text-align:center;overflow:hidden;white-space:nowrap;">27.03.2025</div>
<div class="t" style="left:602px;top:113.87px;width:72px;font-size:12.5px;line-height:16px;color:#000;text-align:center;overflow:hidden;white-space:nowrap;">27.03.2025</div>
<div class="t" style="left:675px;top:113.87px;width:65px;font-size:12.5px;line-height:16px;color:#000;text-align:center;overflow:hidden;white-space:nowrap;">27.03.2025</div>
<div class="t" style="left:741px;top:113.87px;width:54px;font-size:12.5px;line-height:16px;color:#000;text-align:right;overflow:hidden;white-space:nowrap;">589</div>
<div class="t" style="left:799.5px;top:113.87px;width:181.5px;font-size:12.5px;line-height:16px;color:#000;text-align:left;overflow:hidden;white-space:nowrap;">EURO STIL GRADNJA PLUS</div>
<div class="t" style="left:983px;top:113.87px;width:62px;font-size:12.5px;line-height:16px;color:#000;text-align:left;overflow:hidden;white-space:nowrap;">2332</div>
<div class="t" style="left:1046px;top:113.87px;width:46px;font-size:12.5px;line-height:16px;color:#000;text-align:right;overflow:hidden;white-space:nowrap;">0</div>
<div class="t" style="left:1093px;top:113.87px;width:94px;font-size:12.5px;line-height:16px;color:#000;text-align:right;overflow:hidden;white-space:nowrap;">1,000,000.00</div>
<div class="t" style="left:1188px;top:113.87px;width:87px;font-size:12.5px;line-height:16px;color:#000;text-align:right;overflow:hidden;white-space:nowrap;">200,000.00</div>
<div class="t" style="left:1276px;top:113.87px;width:94px;font-size:12.5px;line-height:16px;color:#000;text-align:right;overflow:hidden;white-space:nowrap;">1,200,000.00</div>
<div class="t" style="left:1371px;top:113.87px;width:25px;font-size:12.5px;line-height:16px;color:#000;text-align:right;overflow:hidden;white-space:nowrap;">4</div>
<div class="t" style="left:1397px;top:113.87px;width:111px;font-size:12.5px;line-height:16px;color:#000;text-align:left;overflow:hidden;white-space:nowrap;">Ul. trosak-Interni obracun</div>
<div class="t" style="left:1509px;top:113.87px;width:28px;font-size:12.5px;line-height:16px;color:#000;text-align:right;overflow:hidden;white-space:nowrap;">66</div>
<div class="t" style="left:1538px;top:113.87px;width:111px;font-size:12.5px;line-height:16px;color:#000;text-align:left;overflow:hidden;white-space:nowrap;">Ulaz - Interni obracun</div>
<div class="t" style="left:1650px;top:113.87px;width:36px;font-size:12.5px;line-height:16px;color:#000;text-align:center;overflow:hidden;white-space:nowrap;">1</div>
<div class="t" style="left:1687px;top:112.87px;width:90px;font-size:12.5px;line-height:16px;color:#000;text-align:left;overflow:hidden;white-space:nowrap;">Evidentirano</div>
<div class="t" style="left:1778px;top:112.87px;width:82px;font-size:12.5px;line-height:16px;color:#000;text-align:left;overflow:hidden;white-space:nowrap;">160839</div>
<div class="t" style="left:1861px;top:112.87px;width:98px;font-size:12.5px;line-height:16px;color:#000;text-align:left;overflow:hidden;white-space:nowrap;">eFaktura</div>
<div style="left:0px;top:150px;width:1960px;height:1px;background:#e2e9f3"></div>
<div class="t" style="left:15px;top:132.87px;width:26px;font-size:12.5px;line-height:16px;color:#000;text-align:center;overflow:hidden;white-space:nowrap;">93</div>
<div class="t" style="left:42px;top:132.87px;width:179px;font-size:12.5px;line-height:16px;color:#000;text-align:left;overflow:hidden;white-space:nowrap;">Avansni racun</div>
<div class="t" style="left:222px;top:132.87px;width:54px;font-size:12.5px;line-height:16px;color:#000;text-align:right;overflow:hidden;white-space:nowrap;">259</div>
<div style="left:278px;top:133px;width:45px;height:16px;background:#80c4c0"></div>
<div class="t" style="left:277px;top:132.87px;width:46px;font-size:12.5px;line-height:16px;color:#000;text-align:right;overflow:hidden;white-space:nowrap;">13</div>
<div class="t" style="left:324px;top:132.87px;width:25px;font-size:12.5px;line-height:16px;color:#000;text-align:center;overflow:hidden;white-space:nowrap;">001</div>
<div class="t" style="left:350px;top:132.87px;width:121px;font-size:12.5px;line-height:16px;color:#000;text-align:left;overflow:hidden;white-space:nowrap;">AV-2025-13-001</div>
<div class="t" style="left:472px;top:132.87px;width:61px;font-size:12.5px;line-height:16px;color:#000;text-align:center;overflow:hidden;white-space:nowrap;">2025</div>
<div class="t" style="left:534px;top:132.87px;width:67px;font-size:12.5px;line-height:16px;color:#000;text-align:center;overflow:hidden;white-space:nowrap;">25.03.2025</div>
<div class="t" style="left:602px;top:132.87px;width:72px;font-size:12.5px;line-height:16px;color:#000;text-align:center;overflow:hidden;white-space:nowrap;">25.03.2025</div>
<div class="t" style="left:675px;top:132.87px;width:65px;font-size:12.5px;line-height:16px;color:#000;text-align:center;overflow:hidden;white-space:nowrap;">25.03.2025</div>
<div class="t" style="left:741px;top:132.87px;width:54px;font-size:12.5px;line-height:16px;color:#000;text-align:right;overflow:hidden;white-space:nowrap;">1091</div>
<div class="t" style="left:799.5px;top:132.87px;width:181.5px;font-size:12.5px;line-height:16px;color:#000;text-align:left;overflow:hidden;white-space:nowrap;">DR PR</div>
<div class="t" style="left:983px;top:132.87px;width:62px;font-size:12.5px;line-height:16px;color:#000;text-align:left;overflow:hidden;white-space:nowrap;">1</div>
<div class="t" style="left:1046px;top:132.87px;width:46px;font-size:12.5px;line-height:16px;color:#000;text-align:right;overflow:hidden;white-space:nowrap;">0</div>
<div class="t" style="left:1093px;top:132.87px;width:94px;font-size:12.5px;line-height:16px;color:#000;text-align:right;overflow:hidden;white-space:nowrap;">1,000.00</div>
<div class="t" style="left:1188px;top:132.87px;width:87px;font-size:12.5px;line-height:16px;color:#000;text-align:right;overflow:hidden;white-space:nowrap;">200.00</div>
<div class="t" style="left:1276px;top:132.87px;width:94px;font-size:12.5px;line-height:16px;color:#000;text-align:right;overflow:hidden;white-space:nowrap;">1,200.00</div>
<div class="t" style="left:1371px;top:132.87px;width:25px;font-size:12.5px;line-height:16px;color:#000;text-align:right;overflow:hidden;white-space:nowrap;">1</div>
<div class="t" style="left:1397px;top:132.87px;width:111px;font-size:12.5px;line-height:16px;color:#000;text-align:left;overflow:hidden;white-space:nowrap;">Avansni racun</div>
<div class="t" style="left:1509px;top:132.87px;width:28px;font-size:12.5px;line-height:16px;color:#000;text-align:right;overflow:hidden;white-space:nowrap;">10</div>
<div class="t" style="left:1538px;top:132.87px;width:111px;font-size:12.5px;line-height:16px;color:#000;text-align:left;overflow:hidden;white-space:nowrap;">Primljeni avansi</div>
<div class="t" style="left:1650px;top:132.87px;width:36px;font-size:12.5px;line-height:16px;color:#000;text-align:center;overflow:hidden;white-space:nowrap;">1</div>
<div class="t" style="left:1687px;top:131.87px;width:90px;font-size:12.5px;line-height:16px;color:#000;text-align:left;overflow:hidden;white-space:nowrap;">U slanju</div>
<div class="t" style="left:1778px;top:131.87px;width:82px;font-size:12.5px;line-height:16px;color:#000;text-align:left;overflow:hidden;white-space:nowrap;">4021768</div>
<div class="t" style="left:1861px;top:131.87px;width:98px;font-size:12.5px;line-height:16px;color:#000;text-align:left;overflow:hidden;white-space:nowrap;">eFaktura</div>
<div style="left:0px;top:169px;width:1960px;height:1px;background:#e2e9f3"></div>
<div class="t" style="left:15px;top:151.87px;width:26px;font-size:12.5px;line-height:16px;color:#000;text-align:center;overflow:hidden;white-space:nowrap;">96</div>
<div class="t" style="left:42px;top:151.87px;width:179px;font-size:12.5px;line-height:16px;color:#000;text-align:left;overflow:hidden;white-space:nowrap;">Knjižno odobrenje - Kupci</div>
<div class="t" style="left:222px;top:151.87px;width:54px;font-size:12.5px;line-height:16px;color:#000;text-align:right;overflow:hidden;white-space:nowrap;">138</div>
<div style="left:278px;top:152px;width:45px;height:16px;background:#80c4c0"></div>
<div class="t" style="left:277px;top:151.87px;width:46px;font-size:12.5px;line-height:16px;color:#000;text-align:right;overflow:hidden;white-space:nowrap;">12</div>
<div class="t" style="left:324px;top:151.87px;width:25px;font-size:12.5px;line-height:16px;color:#000;text-align:center;overflow:hidden;white-space:nowrap;">001</div>
<div class="t" style="left:350px;top:151.87px;width:121px;font-size:12.5px;line-height:16px;color:#000;text-align:left;overflow:hidden;white-space:nowrap;">KOK-2025-12-001</div>
<div class="t" style="left:472px;top:151.87px;width:61px;font-size:12.5px;line-height:16px;color:#000;text-align:center;overflow:hidden;white-space:nowrap;">2025</div>
<div class="t" style="left:534px;top:151.87px;width:67px;font-size:12.5px;line-height:16px;color:#000;text-align:center;overflow:hidden;white-space:nowrap;">24.03.2025</div>
<div class="t" style="left:602px;top:151.87px;width:72px;font-size:12.5px;line-height:16px;color:#000;text-align:center;overflow:hidden;white-space:nowrap;">24.03.2025</div>
<div class="t" style="left:675px;top:151.87px;width:65px;font-size:12.5px;line-height:16px;color:#000;text-align:center;overflow:hidden;white-space:nowrap;">24.03.2025</div>
<div class="t" style="left:741px;top:151.87px;width:54px;font-size:12.5px;line-height:16px;color:#000;text-align:right;overflow:hidden;white-space:nowrap;">1091</div>
<div class="t" style="left:799.5px;top:151.87px;width:181.5px;font-size:12.5px;line-height:16px;color:#000;text-align:left;overflow:hidden;white-space:nowrap;">DR PR</div>
<div class="t" style="left:983px;top:151.87px;width:62px;font-size:12.5px;line-height:16px;color:#000;text-align:left;overflow:hidden;white-space:nowrap;">36214</div>
<div class="t" style="left:1046px;top:151.87px;width:46px;font-size:12.5px;line-height:16px;color:#000;text-align:right;overflow:hidden;white-space:nowrap;">0</div>
<div class="t" style="left:1093px;top:151.87px;width:94px;font-size:12.5px;line-height:16px;color:#000;text-align:right;overflow:hidden;white-space:nowrap;">-60,000.00</div>
<div class="t" style="left:1188px;top:151.87px;width:87px;font-size:12.5px;line-height:16px;color:#000;text-align:right;overflow:hidden;white-space:nowrap;">-12,000.00</div>
<div class="t" style="left:1276px;top:151.87px;width:94px;font-size:12.5px;line-height:16px;color:#000;text-align:right;overflow:hidden;white-space:nowrap;">-72,000.00</div>
<div class="t" style="left:1371px;top:151.87px;width:25px;font-size:12.5px;line-height:16px;color:#000;text-align:right;overflow:hidden;white-space:nowrap;">1</div>
<div class="t" style="left:1397px;top:151.87px;width:111px;font-size:12.5px;line-height:16px;color:#000;text-align:left;overflow:hidden;white-space:nowrap;">Knjizno odobrenje - Kupci</div>
<div class="t" style="left:1509px;top:151.87px;width:28px;font-size:12.5px;line-height:16px;color:#000;text-align:right;overflow:hidden;white-space:nowrap;">14</div>
<div class="t" style="left:1538px;top:151.87px;width:111px;font-size:12.5px;line-height:16px;color:#000;text-align:left;overflow:hidden;white-space:nowrap;">Ispravka izlaza</div>
<div class="t" style="left:1650px;top:151.87px;width:36px;font-size:12.5px;line-height:16px;color:#000;text-align:center;overflow:hidden;white-space:nowrap;">1</div>
<div class="t" style="left:1687px;top:150.87px;width:90px;font-size:12.5px;line-height:16px;color:#000;text-align:left;overflow:hidden;white-space:nowrap;">U slanju</div>
<div class="t" style="left:1778px;top:150.87px;width:82px;font-size:12.5px;line-height:16px;color:#000;text-align:left;overflow:hidden;white-space:nowrap;">4015259</div>
<div class="t" style="left:1861px;top:150.87px;width:98px;font-size:12.5px;line-height:16px;color:#000;text-align:left;overflow:hidden;white-space:nowrap;">eFaktura</div>
<div style="left:0px;top:188px;width:1960px;height:1px;background:#e2e9f3"></div>
<div class="t" style="left:15px;top:170.87px;width:26px;font-size:12.5px;line-height:16px;color:#000;text-align:center;overflow:hidden;white-space:nowrap;">93</div>
<div class="t" style="left:42px;top:170.87px;width:179px;font-size:12.5px;line-height:16px;color:#000;text-align:left;overflow:hidden;white-space:nowrap;">Avansni racun</div>
<div class="t" style="left:222px;top:170.87px;width:54px;font-size:12.5px;line-height:16px;color:#000;text-align:right;overflow:hidden;white-space:nowrap;">255</div>
<div style="left:278px;top:171px;width:45px;height:16px;background:#80c4c0"></div>
<div class="t" style="left:277px;top:170.87px;width:46px;font-size:12.5px;line-height:16px;color:#000;text-align:right;overflow:hidden;white-space:nowrap;">9</div>
<div class="t" style="left:324px;top:170.87px;width:25px;font-size:12.5px;line-height:16px;color:#000;text-align:center;overflow:hidden;white-space:nowrap;">001</div>
<div class="t" style="left:350px;top:170.87px;width:121px;font-size:12.5px;line-height:16px;color:#000;text-align:left;overflow:hidden;white-space:nowrap;">AV-2025-9-001</div>
<div class="t" style="left:472px;top:170.87px;width:61px;font-size:12.5px;line-height:16px;color:#000;text-align:center;overflow:hidden;white-space:nowrap;">2025</div>
<div class="t" style="left:534px;top:170.87px;width:67px;font-size:12.5px;line-height:16px;color:#000;text-align:center;overflow:hidden;white-space:nowrap;">24.03.2025</div>
<div class="t" style="left:602px;top:170.87px;width:72px;font-size:12.5px;line-height:16px;color:#000;text-align:center;overflow:hidden;white-space:nowrap;">24.03.2025</div>
<div class="t" style="left:675px;top:170.87px;width:65px;font-size:12.5px;line-height:16px;color:#000;text-align:center;overflow:hidden;white-space:nowrap;">24.03.2025</div>
<div class="t" style="left:741px;top:170.87px;width:54px;font-size:12.5px;line-height:16px;color:#000;text-align:right;overflow:hidden;white-space:nowrap;">1091</div>
<div class="t" style="left:799.5px;top:170.87px;width:181.5px;font-size:12.5px;line-height:16px;color:#000;text-align:left;overflow:hidden;white-space:nowrap;">DR PR</div>
<div class="t" style="left:983px;top:170.87px;width:62px;font-size:12.5px;line-height:16px;color:#000;text-align:left;overflow:hidden;white-space:nowrap;">123659478</div>
<div class="t" style="left:1046px;top:170.87px;width:46px;font-size:12.5px;line-height:16px;color:#000;text-align:right;overflow:hidden;white-space:nowrap;">0</div>
<div class="t" style="left:1093px;top:170.87px;width:94px;font-size:12.5px;line-height:16px;color:#000;text-align:right;overflow:hidden;white-space:nowrap;">5,000.00</div>
<div class="t" style="left:1188px;top:170.87px;width:87px;font-size:12.5px;line-height:16px;color:#000;text-align:right;overflow:hidden;white-space:nowrap;">1,000.00</div>
<div class="t" style="left:1276px;top:170.87px;width:94px;font-size:12.5px;line-height:16px;color:#000;text-align:right;overflow:hidden;white-space:nowrap;">6,000.00</div>
<div class="t" style="left:1371px;top:170.87px;width:25px;font-size:12.5px;line-height:16px;color:#000;text-align:right;overflow:hidden;white-space:nowrap;">1</div>
<div class="t" style="left:1397px;top:170.87px;width:111px;font-size:12.5px;line-height:16px;color:#000;text-align:left;overflow:hidden;white-space:nowrap;">Avansni racun</div>
<div class="t" style="left:1509px;top:170.87px;width:28px;font-size:12.5px;line-height:16px;color:#000;text-align:right;overflow:hidden;white-space:nowrap;">10</div>
<div class="t" style="left:1538px;top:170.87px;width:111px;font-size:12.5px;line-height:16px;color:#000;text-align:left;overflow:hidden;white-space:nowrap;">Primljeni avansi</div>
<div class="t" style="left:1650px;top:170.87px;width:36px;font-size:12.5px;line-height:16px;color:#000;text-align:center;overflow:hidden;white-space:nowrap;">1</div>
<div class="t" style="left:1687px;top:169.87px;width:90px;font-size:12.5px;line-height:16px;color:#000;text-align:left;overflow:hidden;white-space:nowrap;">U slanju</div>
<div class="t" style="left:1778px;top:169.87px;width:82px;font-size:12.5px;line-height:16px;color:#000;text-align:left;overflow:hidden;white-space:nowrap;">4015180</div>
<div class="t" style="left:1861px;top:169.87px;width:98px;font-size:12.5px;line-height:16px;color:#000;text-align:left;overflow:hidden;white-space:nowrap;">eFaktura</div>
<div style="left:0px;top:207px;width:1960px;height:1px;background:#e2e9f3"></div>
<div class="t" style="left:15px;top:189.87px;width:26px;font-size:12.5px;line-height:16px;color:#000;text-align:center;overflow:hidden;white-space:nowrap;">93</div>
<div class="t" style="left:42px;top:189.87px;width:179px;font-size:12.5px;line-height:16px;color:#000;text-align:left;overflow:hidden;white-space:nowrap;">Avansni racun</div>
<div class="t" style="left:222px;top:189.87px;width:54px;font-size:12.5px;line-height:16px;color:#000;text-align:right;overflow:hidden;white-space:nowrap;">257</div>
<div style="left:278px;top:190px;width:45px;height:16px;background:#80c4c0"></div>
<div class="t" style="left:277px;top:189.87px;width:46px;font-size:12.5px;line-height:16px;color:#000;text-align:right;overflow:hidden;white-space:nowrap;">11</div>
<div class="t" style="left:324px;top:189.87px;width:25px;font-size:12.5px;line-height:16px;color:#000;text-align:center;overflow:hidden;white-space:nowrap;">001</div>
<div class="t" style="left:350px;top:189.87px;width:121px;font-size:12.5px;line-height:16px;color:#000;text-align:left;overflow:hidden;white-space:nowrap;">AV-2025-11-001</div>
<div class="t" style="left:472px;top:189.87px;width:61px;font-size:12.5px;line-height:16px;color:#000;text-align:center;overflow:hidden;white-space:nowrap;">2025</div>
<div class="t" style="left:534px;top:189.87px;width:67px;font-size:12.5px;line-height:16px;color:#000;text-align:center;overflow:hidden;white-space:nowrap;">24.03.2025</div>
<div class="t" style="left:602px;top:189.87px;width:72px;font-size:12.5px;line-height:16px;color:#000;text-align:center;overflow:hidden;white-space:nowrap;">24.03.2025</div>
<div class="t" style="left:675px;top:189.87px;width:65px;font-size:12.5px;line-height:16px;color:#000;text-align:center;overflow:hidden;white-space:nowrap;">24.03.2025</div>
<div class="t" style="left:741px;top:189.87px;width:54px;font-size:12.5px;line-height:16px;color:#000;text-align:right;overflow:hidden;white-space:nowrap;">1091</div>
<div class="t" style="left:799.5px;top:189.87px;width:181.5px;font-size:12.5px;line-height:16px;color:#000;text-align:left;overflow:hidden;white-space:nowrap;">DR PR</div>
<div class="t" style="left:983px;top:189.87px;width:62px;font-size:12.5px;line-height:16px;color:#000;text-align:left;overflow:hidden;white-space:nowrap;">456321</div>
<div class="t" style="left:1046px;top:189.87px;width:46px;font-size:12.5px;line-height:16px;color:#000;text-align:right;overflow:hidden;white-space:nowrap;">0</div>
<div class="t" style="left:1093px;top:189.87px;width:94px;font-size:12.5px;line-height:16px;color:#000;text-align:right;overflow:hidden;white-space:nowrap;">200,000.00</div>
<div class="t" style="left:1188px;top:189.87px;width:87px;font-size:12.5px;line-height:16px;color:#000;text-align:right;overflow:hidden;white-space:nowrap;">40,000.00</div>
<div class="t" style="left:1276px;top:189.87px;width:94px;font-size:12.5px;line-height:16px;color:#000;text-align:right;overflow:hidden;white-space:nowrap;">240,000.00</div>
<div class="t" style="left:1371px;top:189.87px;width:25px;font-size:12.5px;line-height:16px;color:#000;text-align:right;overflow:hidden;white-space:nowrap;">1</div>
<div class="t" style="left:1397px;top:189.87px;width:111px;font-size:12.5px;line-height:16px;color:#000;text-align:left;overflow:hidden;white-space:nowrap;">Avansni racun</div>
<div class="t" style="left:1509px;top:189.87px;width:28px;font-size:12.5px;line-height:16px;color:#000;text-align:right;overflow:hidden;white-space:nowrap;">10</div>
<div class="t" style="left:1538px;top:189.87px;width:111px;font-size:12.5px;line-height:16px;color:#000;text-align:left;overflow:hidden;white-space:nowrap;">Primljeni avansi</div>
<div class="t" style="left:1650px;top:189.87px;width:36px;font-size:12.5px;line-height:16px;color:#000;text-align:center;overflow:hidden;white-space:nowrap;">1</div>
<div class="t" style="left:1687px;top:188.87px;width:90px;font-size:12.5px;line-height:16px;color:#000;text-align:left;overflow:hidden;white-space:nowrap;">U slanju</div>
<div class="t" style="left:1778px;top:188.87px;width:82px;font-size:12.5px;line-height:16px;color:#000;text-align:left;overflow:hidden;white-space:nowrap;">4015253</div>
<div class="t" style="left:1861px;top:188.87px;width:98px;font-size:12.5px;line-height:16px;color:#000;text-align:left;overflow:hidden;white-space:nowrap;">eFaktura</div>
<div style="left:0px;top:226px;width:1960px;height:1px;background:#e2e9f3"></div>
<div class="t" style="left:15px;top:208.87px;width:26px;font-size:12.5px;line-height:16px;color:#000;text-align:center;overflow:hidden;white-space:nowrap;">93</div>
<div class="t" style="left:42px;top:208.87px;width:179px;font-size:12.5px;line-height:16px;color:#000;text-align:left;overflow:hidden;white-space:nowrap;">Avansni racun</div>
<div class="t" style="left:222px;top:208.87px;width:54px;font-size:12.5px;line-height:16px;color:#000;text-align:right;overflow:hidden;white-space:nowrap;">258</div>
<div style="left:278px;top:209px;width:45px;height:16px;background:#80c4c0"></div>
<div class="t" style="left:277px;top:208.87px;width:46px;font-size:12.5px;line-height:16px;color:#000;text-align:right;overflow:hidden;white-space:nowrap;">12</div>
<div class="t" style="left:324px;top:208.87px;width:25px;font-size:12.5px;line-height:16px;color:#000;text-align:center;overflow:hidden;white-space:nowrap;">001</div>
<div class="t" style="left:350px;top:208.87px;width:121px;font-size:12.5px;line-height:16px;color:#000;text-align:left;overflow:hidden;white-space:nowrap;">AV-2025-12-001</div>
<div class="t" style="left:472px;top:208.87px;width:61px;font-size:12.5px;line-height:16px;color:#000;text-align:center;overflow:hidden;white-space:nowrap;">2025</div>
<div class="t" style="left:534px;top:208.87px;width:67px;font-size:12.5px;line-height:16px;color:#000;text-align:center;overflow:hidden;white-space:nowrap;">24.03.2025</div>
<div class="t" style="left:602px;top:208.87px;width:72px;font-size:12.5px;line-height:16px;color:#000;text-align:center;overflow:hidden;white-space:nowrap;">24.03.2025</div>
<div class="t" style="left:675px;top:208.87px;width:65px;font-size:12.5px;line-height:16px;color:#000;text-align:center;overflow:hidden;white-space:nowrap;">24.03.2025</div>
<div class="t" style="left:741px;top:208.87px;width:54px;font-size:12.5px;line-height:16px;color:#000;text-align:right;overflow:hidden;white-space:nowrap;">1091</div>
<div class="t" style="left:799.5px;top:208.87px;width:181.5px;font-size:12.5px;line-height:16px;color:#000;text-align:left;overflow:hidden;white-space:nowrap;">DR PR</div>
<div class="t" style="left:983px;top:208.87px;width:62px;font-size:12.5px;line-height:16px;color:#000;text-align:left;overflow:hidden;white-space:nowrap;">95123654</div>
<div class="t" style="left:1046px;top:208.87px;width:46px;font-size:12.5px;line-height:16px;color:#000;text-align:right;overflow:hidden;white-space:nowrap;">0</div>
<div class="t" style="left:1093px;top:208.87px;width:94px;font-size:12.5px;line-height:16px;color:#000;text-align:right;overflow:hidden;white-space:nowrap;">60,000.00</div>
<div class="t" style="left:1188px;top:208.87px;width:87px;font-size:12.5px;line-height:16px;color:#000;text-align:right;overflow:hidden;white-space:nowrap;">12,000.00</div>
<div class="t" style="left:1276px;top:208.87px;width:94px;font-size:12.5px;line-height:16px;color:#000;text-align:right;overflow:hidden;white-space:nowrap;">72,000.00</div>
<div class="t" style="left:1371px;top:208.87px;width:25px;font-size:12.5px;line-height:16px;color:#000;text-align:right;overflow:hidden;white-space:nowrap;">1</div>
<div class="t" style="left:1397px;top:208.87px;width:111px;font-size:12.5px;line-height:16px;color:#000;text-align:left;overflow:hidden;white-space:nowrap;">Avansni racun</div>
<div class="t" style="left:1509px;top:208.87px;width:28px;font-size:12.5px;line-height:16px;color:#000;text-align:right;overflow:hidden;white-space:nowrap;">10</div>
<div class="t" style="left:1538px;top:208.87px;width:111px;font-size:12.5px;line-height:16px;color:#000;text-align:left;overflow:hidden;white-space:nowrap;">Primljeni avansi</div>
<div class="t" style="left:1650px;top:208.87px;width:36px;font-size:12.5px;line-height:16px;color:#000;text-align:center;overflow:hidden;white-space:nowrap;">1</div>
<div class="t" style="left:1687px;top:207.87px;width:90px;font-size:12.5px;line-height:16px;color:#000;text-align:left;overflow:hidden;white-space:nowrap;">U slanju</div>
<div class="t" style="left:1778px;top:207.87px;width:82px;font-size:12.5px;line-height:16px;color:#000;text-align:left;overflow:hidden;white-space:nowrap;">4015255</div>
<div class="t" style="left:1861px;top:207.87px;width:98px;font-size:12.5px;line-height:16px;color:#000;text-align:left;overflow:hidden;white-space:nowrap;">eFaktura</div>
<div style="left:0px;top:245px;width:1960px;height:1px;background:#e2e9f3"></div>
<div class="t" style="left:15px;top:227.87px;width:26px;font-size:12.5px;line-height:16px;color:#000;text-align:center;overflow:hidden;white-space:nowrap;">96</div>
<div class="t" style="left:42px;top:227.87px;width:179px;font-size:12.5px;line-height:16px;color:#000;text-align:left;overflow:hidden;white-space:nowrap;">Knjižno odobrenje - Kupci</div>
<div class="t" style="left:222px;top:227.87px;width:54px;font-size:12.5px;line-height:16px;color:#000;text-align:right;overflow:hidden;white-space:nowrap;">135</div>
<div style="left:278px;top:228px;width:45px;height:16px;background:#80c4c0"></div>
<div class="t" style="left:277px;top:227.87px;width:46px;font-size:12.5px;line-height:16px;color:#000;text-align:right;overflow:hidden;white-space:nowrap;">9</div>
<div class="t" style="left:324px;top:227.87px;width:25px;font-size:12.5px;line-height:16px;color:#000;text-align:center;overflow:hidden;white-space:nowrap;">001</div>
<div class="t" style="left:350px;top:227.87px;width:121px;font-size:12.5px;line-height:16px;color:#000;text-align:left;overflow:hidden;white-space:nowrap;">KOK-2025-9-001</div>
<div class="t" style="left:472px;top:227.87px;width:61px;font-size:12.5px;line-height:16px;color:#000;text-align:center;overflow:hidden;white-space:nowrap;">2025</div>
<div class="t" style="left:534px;top:227.87px;width:67px;font-size:12.5px;line-height:16px;color:#000;text-align:center;overflow:hidden;white-space:nowrap;">24.03.2025</div>
<div class="t" style="left:602px;top:227.87px;width:72px;font-size:12.5px;line-height:16px;color:#000;text-align:center;overflow:hidden;white-space:nowrap;">24.03.2025</div>
<div class="t" style="left:675px;top:227.87px;width:65px;font-size:12.5px;line-height:16px;color:#000;text-align:center;overflow:hidden;white-space:nowrap;">24.03.2025</div>
<div class="t" style="left:741px;top:227.87px;width:54px;font-size:12.5px;line-height:16px;color:#000;text-align:right;overflow:hidden;white-space:nowrap;">1091</div>
<div class="t" style="left:799.5px;top:227.87px;width:181.5px;font-size:12.5px;line-height:16px;color:#000;text-align:left;overflow:hidden;white-space:nowrap;">DR PR</div>
<div class="t" style="left:983px;top:227.87px;width:62px;font-size:12.5px;line-height:16px;color:#000;text-align:left;overflow:hidden;white-space:nowrap;">253212</div>
<div class="t" style="left:1046px;top:227.87px;width:46px;font-size:12.5px;line-height:16px;color:#000;text-align:right;overflow:hidden;white-space:nowrap;">0</div>
<div class="t" style="left:1093px;top:227.87px;width:94px;font-size:12.5px;line-height:16px;color:#000;text-align:right;overflow:hidden;white-space:nowrap;">-10,000.00</div>
<div class="t" style="left:1188px;top:227.87px;width:87px;font-size:12.5px;line-height:16px;color:#000;text-align:right;overflow:hidden;white-space:nowrap;">-2,000.00</div>
<div class="t" style="left:1276px;top:227.87px;width:94px;font-size:12.5px;line-height:16px;color:#000;text-align:right;overflow:hidden;white-space:nowrap;">-12,000.00</div>
<div class="t" style="left:1371px;top:227.87px;width:25px;font-size:12.5px;line-height:16px;color:#000;text-align:right;overflow:hidden;white-space:nowrap;">1</div>
<div class="t" style="left:1397px;top:227.87px;width:111px;font-size:12.5px;line-height:16px;color:#000;text-align:left;overflow:hidden;white-space:nowrap;">Knjizno odobrenje - Kupci</div>
<div class="t" style="left:1509px;top:227.87px;width:28px;font-size:12.5px;line-height:16px;color:#000;text-align:right;overflow:hidden;white-space:nowrap;">14</div>
<div class="t" style="left:1538px;top:227.87px;width:111px;font-size:12.5px;line-height:16px;color:#000;text-align:left;overflow:hidden;white-space:nowrap;">Ispravka izlaza</div>
<div class="t" style="left:1650px;top:227.87px;width:36px;font-size:12.5px;line-height:16px;color:#000;text-align:center;overflow:hidden;white-space:nowrap;">1</div>
<div class="t" style="left:1687px;top:226.87px;width:90px;font-size:12.5px;line-height:16px;color:#000;text-align:left;overflow:hidden;white-space:nowrap;">Poslata</div>
<div class="t" style="left:1778px;top:226.87px;width:82px;font-size:12.5px;line-height:16px;color:#000;text-align:left;overflow:hidden;white-space:nowrap;">4012174</div>
<div class="t" style="left:1861px;top:226.87px;width:98px;font-size:12.5px;line-height:16px;color:#000;text-align:left;overflow:hidden;white-space:nowrap;">eFaktura</div>
<div style="left:0px;top:264px;width:1960px;height:1px;background:#e2e9f3"></div>
<div class="t" style="left:15px;top:246.87px;width:26px;font-size:12.5px;line-height:16px;color:#000;text-align:center;overflow:hidden;white-space:nowrap;">95</div>
<div class="t" style="left:42px;top:246.87px;width:179px;font-size:12.5px;line-height:16px;color:#000;text-align:left;overflow:hidden;white-space:nowrap;">Knjižno zaduženje - Kupci</div>
<div class="t" style="left:222px;top:246.87px;width:54px;font-size:12.5px;line-height:16px;color:#000;text-align:right;overflow:hidden;white-space:nowrap;">82</div>
<div style="left:278px;top:247px;width:45px;height:16px;background:#80c4c0"></div>
<div class="t" style="left:277px;top:246.87px;width:46px;font-size:12.5px;line-height:16px;color:#000;text-align:right;overflow:hidden;white-space:nowrap;">3</div>
<div class="t" style="left:324px;top:246.87px;width:25px;font-size:12.5px;line-height:16px;color:#000;text-align:center;overflow:hidden;white-space:nowrap;">001</div>
<div class="t" style="left:350px;top:246.87px;width:121px;font-size:12.5px;line-height:16px;color:#000;text-align:left;overflow:hidden;white-space:nowrap;">KZK-2025-3-001</div>
<div class="t" style="left:472px;top:246.87px;width:61px;font-size:12.5px;line-height:16px;color:#000;text-align:center;overflow:hidden;white-space:nowrap;">2025</div>
<div class="t" style="left:534px;top:246.87px;width:67px;font-size:12.5px;line-height:16px;color:#000;text-align:center;overflow:hidden;white-space:nowrap;">24.03.2025</div>
<div class="t" style="left:602px;top:246.87px;width:72px;font-size:12.5px;line-height:16px;color:#000;text-align:center;overflow:hidden;white-space:nowrap;">24.03.2025</div>
<div class="t" style="left:675px;top:246.87px;width:65px;font-size:12.5px;line-height:16px;color:#000;text-align:center;overflow:hidden;white-space:nowrap;">24.03.2025</div>
<div class="t" style="left:741px;top:246.87px;width:54px;font-size:12.5px;line-height:16px;color:#000;text-align:right;overflow:hidden;white-space:nowrap;">1091</div>
<div class="t" style="left:799.5px;top:246.87px;width:181.5px;font-size:12.5px;line-height:16px;color:#000;text-align:left;overflow:hidden;white-space:nowrap;">DR PR</div>
<div class="t" style="left:983px;top:246.87px;width:62px;font-size:12.5px;line-height:16px;color:#000;text-align:left;overflow:hidden;white-space:nowrap;">526423</div>
<div class="t" style="left:1046px;top:246.87px;width:46px;font-size:12.5px;line-height:16px;color:#000;text-align:right;overflow:hidden;white-space:nowrap;">0</div>
<div class="t" style="left:1093px;top:246.87px;width:94px;font-size:12.5px;line-height:16px;color:#000;text-align:right;overflow:hidden;white-space:nowrap;">150,000.00</div>
<div class="t" style="left:1188px;top:246.87px;width:87px;font-size:12.5px;line-height:16px;color:#000;text-align:right;overflow:hidden;white-space:nowrap;">30,000.00</div>
<div class="t" style="left:1276px;top:246.87px;width:94px;font-size:12.5px;line-height:16px;color:#000;text-align:right;overflow:hidden;white-space:nowrap;">180,000.00</div>
<div class="t" style="left:1371px;top:246.87px;width:25px;font-size:12.5px;line-height:16px;color:#000;text-align:right;overflow:hidden;white-space:nowrap;">1</div>
<div class="t" style="left:1397px;top:246.87px;width:111px;font-size:12.5px;line-height:16px;color:#000;text-align:left;overflow:hidden;white-space:nowrap;">Knjižno zaduženje - Kupci</div>
<div class="t" style="left:1509px;top:246.87px;width:28px;font-size:12.5px;line-height:16px;color:#000;text-align:right;overflow:hidden;white-space:nowrap;">14</div>
<div class="t" style="left:1538px;top:246.87px;width:111px;font-size:12.5px;line-height:16px;color:#000;text-align:left;overflow:hidden;white-space:nowrap;">Ispravka izlaza</div>
<div class="t" style="left:1650px;top:246.87px;width:36px;font-size:12.5px;line-height:16px;color:#000;text-align:center;overflow:hidden;white-space:nowrap;">1</div>
<div class="t" style="left:1687px;top:245.87px;width:90px;font-size:12.5px;line-height:16px;color:#000;text-align:left;overflow:hidden;white-space:nowrap;">Poslata</div>
<div class="t" style="left:1778px;top:245.87px;width:82px;font-size:12.5px;line-height:16px;color:#000;text-align:left;overflow:hidden;white-space:nowrap;">4015184</div>
<div class="t" style="left:1861px;top:245.87px;width:98px;font-size:12.5px;line-height:16px;color:#000;text-align:left;overflow:hidden;white-space:nowrap;">eFaktura</div>
<div style="left:0px;top:283px;width:1960px;height:1px;background:#e2e9f3"></div>
<div class="t" style="left:15px;top:265.87px;width:26px;font-size:12.5px;line-height:16px;color:#000;text-align:center;overflow:hidden;white-space:nowrap;">93</div>
<div class="t" style="left:42px;top:265.87px;width:179px;font-size:12.5px;line-height:16px;color:#000;text-align:left;overflow:hidden;white-space:nowrap;">Avansni racun</div>
<div class="t" style="left:222px;top:265.87px;width:54px;font-size:12.5px;line-height:16px;color:#000;text-align:right;overflow:hidden;white-space:nowrap;">256</div>
<div style="left:278px;top:266px;width:45px;height:16px;background:#80c4c0"></div>
<div class="t" style="left:277px;top:265.87px;width:46px;font-size:12.5px;line-height:16px;color:#000;text-align:right;overflow:hidden;white-space:nowrap;">10</div>
<div class="t" style="left:324px;top:265.87px;width:25px;font-size:12.5px;line-height:16px;color:#000;text-align:center;overflow:hidden;white-space:nowrap;">001</div>
<div class="t" style="left:350px;top:265.87px;width:121px;font-size:12.5px;line-height:16px;color:#000;text-align:left;overflow:hidden;white-space:nowrap;">AV-2025-10-001</div>
<div class="t" style="left:472px;top:265.87px;width:61px;font-size:12.5px;line-height:16px;color:#000;text-align:center;overflow:hidden;white-space:nowrap;">2025</div>
<div class="t" style="left:534px;top:265.87px;width:67px;font-size:12.5px;line-height:16px;color:#000;text-align:center;overflow:hidden;white-space:nowrap;">24.03.2025</div>
<div class="t" style="left:602px;top:265.87px;width:72px;font-size:12.5px;line-height:16px;color:#000;text-align:center;overflow:hidden;white-space:nowrap;">24.03.2025</div>
<div class="t" style="left:675px;top:265.87px;width:65px;font-size:12.5px;line-height:16px;color:#000;text-align:center;overflow:hidden;white-space:nowrap;">24.03.2025</div>
<div class="t" style="left:741px;top:265.87px;width:54px;font-size:12.5px;line-height:16px;color:#000;text-align:right;overflow:hidden;white-space:nowrap;">1091</div>
<div class="t" style="left:799.5px;top:265.87px;width:181.5px;font-size:12.5px;line-height:16px;color:#000;text-align:left;overflow:hidden;white-space:nowrap;">DR PR</div>
<div class="t" style="left:983px;top:265.87px;width:62px;font-size:12.5px;line-height:16px;color:#000;text-align:left;overflow:hidden;white-space:nowrap;">852364</div>
<div class="t" style="left:1046px;top:265.87px;width:46px;font-size:12.5px;line-height:16px;color:#000;text-align:right;overflow:hidden;white-space:nowrap;">0</div>
<div class="t" style="left:1093px;top:265.87px;width:94px;font-size:12.5px;line-height:16px;color:#000;text-align:right;overflow:hidden;white-space:nowrap;">20,000.00</div>
<div class="t" style="left:1188px;top:265.87px;width:87px;font-size:12.5px;line-height:16px;color:#000;text-align:right;overflow:hidden;white-space:nowrap;">4,000.00</div>
<div class="t" style="left:1276px;top:265.87px;width:94px;font-size:12.5px;line-height:16px;color:#000;text-align:right;overflow:hidden;white-space:nowrap;">24,000.00</div>
<div class="t" style="left:1371px;top:265.87px;width:25px;font-size:12.5px;line-height:16px;color:#000;text-align:right;overflow:hidden;white-space:nowrap;">1</div>
<div class="t" style="left:1397px;top:265.87px;width:111px;font-size:12.5px;line-height:16px;color:#000;text-align:left;overflow:hidden;white-space:nowrap;">Avansni racun</div>
<div class="t" style="left:1509px;top:265.87px;width:28px;font-size:12.5px;line-height:16px;color:#000;text-align:right;overflow:hidden;white-space:nowrap;">10</div>
<div class="t" style="left:1538px;top:265.87px;width:111px;font-size:12.5px;line-height:16px;color:#000;text-align:left;overflow:hidden;white-space:nowrap;">Primljeni avansi</div>
<div class="t" style="left:1650px;top:265.87px;width:36px;font-size:12.5px;line-height:16px;color:#000;text-align:center;overflow:hidden;white-space:nowrap;">1</div>
<div class="t" style="left:1687px;top:264.87px;width:90px;font-size:12.5px;line-height:16px;color:#000;text-align:left;overflow:hidden;white-space:nowrap;">U slanju</div>
<div class="t" style="left:1778px;top:264.87px;width:82px;font-size:12.5px;line-height:16px;color:#000;text-align:left;overflow:hidden;white-space:nowrap;">4015169</div>
<div class="t" style="left:1861px;top:264.87px;width:98px;font-size:12.5px;line-height:16px;color:#000;text-align:left;overflow:hidden;white-space:nowrap;">eFaktura</div>
<div style="left:0px;top:302px;width:1960px;height:1px;background:#e2e9f3"></div>
<div class="t" style="left:15px;top:284.87px;width:26px;font-size:12.5px;line-height:16px;color:#000;text-align:center;overflow:hidden;white-space:nowrap;">96</div>
<div class="t" style="left:42px;top:284.87px;width:179px;font-size:12.5px;line-height:16px;color:#000;text-align:left;overflow:hidden;white-space:nowrap;">Knjižno odobrenje - Kupci</div>
<div class="t" style="left:222px;top:284.87px;width:54px;font-size:12.5px;line-height:16px;color:#000;text-align:right;overflow:hidden;white-space:nowrap;">136</div>
<div style="left:278px;top:285px;width:45px;height:16px;background:#80c4c0"></div>
<div class="t" style="left:277px;top:284.87px;width:46px;font-size:12.5px;line-height:16px;color:#000;text-align:right;overflow:hidden;white-space:nowrap;">10</div>
<div class="t" style="left:324px;top:284.87px;width:25px;font-size:12.5px;line-height:16px;color:#000;text-align:center;overflow:hidden;white-space:nowrap;">001</div>
<div class="t" style="left:350px;top:284.87px;width:121px;font-size:12.5px;line-height:16px;color:#000;text-align:left;overflow:hidden;white-space:nowrap;">KOK-2025-10-001</div>
<div class="t" style="left:472px;top:284.87px;width:61px;font-size:12.5px;line-height:16px;color:#000;text-align:center;overflow:hidden;white-space:nowrap;">2025</div>
<div class="t" style="left:534px;top:284.87px;width:67px;font-size:12.5px;line-height:16px;color:#000;text-align:center;overflow:hidden;white-space:nowrap;">24.03.2025</div>
<div class="t" style="left:602px;top:284.87px;width:72px;font-size:12.5px;line-height:16px;color:#000;text-align:center;overflow:hidden;white-space:nowrap;">24.03.2025</div>
<div class="t" style="left:675px;top:284.87px;width:65px;font-size:12.5px;line-height:16px;color:#000;text-align:center;overflow:hidden;white-space:nowrap;">24.03.2025</div>
<div class="t" style="left:741px;top:284.87px;width:54px;font-size:12.5px;line-height:16px;color:#000;text-align:right;overflow:hidden;white-space:nowrap;">1091</div>
<div class="t" style="left:799.5px;top:284.87px;width:181.5px;font-size:12.5px;line-height:16px;color:#000;text-align:left;overflow:hidden;white-space:nowrap;">DR PR</div>
<div class="t" style="left:983px;top:284.87px;width:62px;font-size:12.5px;line-height:16px;color:#000;text-align:left;overflow:hidden;white-space:nowrap;">4569852</div>
<div class="t" style="left:1046px;top:284.87px;width:46px;font-size:12.5px;line-height:16px;color:#000;text-align:right;overflow:hidden;white-space:nowrap;">0</div>
<div class="t" style="left:1093px;top:284.87px;width:94px;font-size:12.5px;line-height:16px;color:#000;text-align:right;overflow:hidden;white-space:nowrap;">-20,000.00</div>
<div class="t" style="left:1188px;top:284.87px;width:87px;font-size:12.5px;line-height:16px;color:#000;text-align:right;overflow:hidden;white-space:nowrap;">-4,000.00</div>
<div class="t" style="left:1276px;top:284.87px;width:94px;font-size:12.5px;line-height:16px;color:#000;text-align:right;overflow:hidden;white-space:nowrap;">-24,000.00</div>
<div class="t" style="left:1371px;top:284.87px;width:25px;font-size:12.5px;line-height:16px;color:#000;text-align:right;overflow:hidden;white-space:nowrap;">1</div>
<div class="t" style="left:1397px;top:284.87px;width:111px;font-size:12.5px;line-height:16px;color:#000;text-align:left;overflow:hidden;white-space:nowrap;">Knjizno odobrenje - Kupci</div>
<div class="t" style="left:1509px;top:284.87px;width:28px;font-size:12.5px;line-height:16px;color:#000;text-align:right;overflow:hidden;white-space:nowrap;">14</div>
<div class="t" style="left:1538px;top:284.87px;width:111px;font-size:12.5px;line-height:16px;color:#000;text-align:left;overflow:hidden;white-space:nowrap;">Ispravka izlaza</div>
<div class="t" style="left:1650px;top:284.87px;width:36px;font-size:12.5px;line-height:16px;color:#000;text-align:center;overflow:hidden;white-space:nowrap;">1</div>
<div class="t" style="left:1687px;top:283.87px;width:90px;font-size:12.5px;line-height:16px;color:#000;text-align:left;overflow:hidden;white-space:nowrap;">U slanju</div>
<div class="t" style="left:1778px;top:283.87px;width:82px;font-size:12.5px;line-height:16px;color:#000;text-align:left;overflow:hidden;white-space:nowrap;">4015187</div>
<div class="t" style="left:1861px;top:283.87px;width:98px;font-size:12.5px;line-height:16px;color:#000;text-align:left;overflow:hidden;white-space:nowrap;">eFaktura</div>
<div style="left:0px;top:321px;width:1960px;height:1px;background:#e2e9f3"></div>
<div class="t" style="left:15px;top:303.87px;width:26px;font-size:12.5px;line-height:16px;color:#000;text-align:center;overflow:hidden;white-space:nowrap;">95</div>
<div class="t" style="left:42px;top:303.87px;width:179px;font-size:12.5px;line-height:16px;color:#000;text-align:left;overflow:hidden;white-space:nowrap;">Knjižno zaduženje - Kupci</div>
<div class="t" style="left:222px;top:303.87px;width:54px;font-size:12.5px;line-height:16px;color:#000;text-align:right;overflow:hidden;white-space:nowrap;">83</div>
<div style="left:278px;top:304px;width:45px;height:16px;background:#80c4c0"></div>
<div class="t" style="left:277px;top:303.87px;width:46px;font-size:12.5px;line-height:16px;color:#000;text-align:right;overflow:hidden;white-space:nowrap;">4</div>
<div class="t" style="left:324px;top:303.87px;width:25px;font-size:12.5px;line-height:16px;color:#000;text-align:center;overflow:hidden;white-space:nowrap;">001</div>
<div class="t" style="left:350px;top:303.87px;width:121px;font-size:12.5px;line-height:16px;color:#000;text-align:left;overflow:hidden;white-space:nowrap;">KZK-2025-4-001</div>
<div class="t" style="left:472px;top:303.87px;width:61px;font-size:12.5px;line-height:16px;color:#000;text-align:center;overflow:hidden;white-space:nowrap;">2025</div>
<div class="t" style="left:534px;top:303.87px;width:67px;font-size:12.5px;line-height:16px;color:#000;text-align:center;overflow:hidden;white-space:nowrap;">24.03.2025</div>
<div class="t" style="left:602px;top:303.87px;width:72px;font-size:12.5px;line-height:16px;color:#000;text-align:center;overflow:hidden;white-space:nowrap;">24.03.2025</div>
<div class="t" style="left:675px;top:303.87px;width:65px;font-size:12.5px;line-height:16px;color:#000;text-align:center;overflow:hidden;white-space:nowrap;">24.03.2025</div>
<div class="t" style="left:741px;top:303.87px;width:54px;font-size:12.5px;line-height:16px;color:#000;text-align:right;overflow:hidden;white-space:nowrap;">1091</div>
<div class="t" style="left:799.5px;top:303.87px;width:181.5px;font-size:12.5px;line-height:16px;color:#000;text-align:left;overflow:hidden;white-space:nowrap;">DR PR</div>
<div class="t" style="left:983px;top:303.87px;width:62px;font-size:12.5px;line-height:16px;color:#000;text-align:left;overflow:hidden;white-space:nowrap;">95126</div>
<div class="t" style="left:1046px;top:303.87px;width:46px;font-size:12.5px;line-height:16px;color:#000;text-align:right;overflow:hidden;white-space:nowrap;">0</div>
<div class="t" style="left:1093px;top:303.87px;width:94px;font-size:12.5px;line-height:16px;color:#000;text-align:right;overflow:hidden;white-space:nowrap;">50,000.00</div>
<div class="t" style="left:1188px;top:303.87px;width:87px;font-size:12.5px;line-height:16px;color:#000;text-align:right;overflow:hidden;white-space:nowrap;">10,000.00</div>
<div class="t" style="left:1276px;top:303.87px;width:94px;font-size:12.5px;line-height:16px;color:#000;text-align:right;overflow:hidden;white-space:nowrap;">60,000.00</div>
<div class="t" style="left:1371px;top:303.87px;width:25px;font-size:12.5px;line-height:16px;color:#000;text-align:right;overflow:hidden;white-space:nowrap;">1</div>
<div class="t" style="left:1397px;top:303.87px;width:111px;font-size:12.5px;line-height:16px;color:#000;text-align:left;overflow:hidden;white-space:nowrap;">Knjižno zaduženje - Kupci</div>
<div class="t" style="left:1509px;top:303.87px;width:28px;font-size:12.5px;line-height:16px;color:#000;text-align:right;overflow:hidden;white-space:nowrap;">14</div>
<div class="t" style="left:1538px;top:303.87px;width:111px;font-size:12.5px;line-height:16px;color:#000;text-align:left;overflow:hidden;white-space:nowrap;">Ispravka izlaza</div>
<div class="t" style="left:1650px;top:303.87px;width:36px;font-size:12.5px;line-height:16px;color:#000;text-align:center;overflow:hidden;white-space:nowrap;">1</div>
<div class="t" style="left:1687px;top:302.87px;width:90px;font-size:12.5px;line-height:16px;color:#000;text-align:left;overflow:hidden;white-space:nowrap;">U slanju</div>
<div class="t" style="left:1778px;top:302.87px;width:82px;font-size:12.5px;line-height:16px;color:#000;text-align:left;overflow:hidden;white-space:nowrap;">4015270</div>
<div class="t" style="left:1861px;top:302.87px;width:98px;font-size:12.5px;line-height:16px;color:#000;text-align:left;overflow:hidden;white-space:nowrap;">eFaktura</div>
<div style="left:14px;top:17px;width:1px;height:305px;background:#e2e9f3"></div>
<div style="left:41px;top:17px;width:1px;height:305px;background:#e2e9f3"></div>
<div style="left:221px;top:17px;width:1px;height:305px;background:#e2e9f3"></div>
<div style="left:276px;top:17px;width:1px;height:305px;background:#e2e9f3"></div>
<div style="left:323px;top:17px;width:1px;height:305px;background:#e2e9f3"></div>
<div style="left:349px;top:17px;width:1px;height:305px;background:#e2e9f3"></div>
<div style="left:471px;top:17px;width:1px;height:305px;background:#e2e9f3"></div>
<div style="left:533px;top:17px;width:1px;height:305px;background:#e2e9f3"></div>
<div style="left:601px;top:17px;width:1px;height:305px;background:#e2e9f3"></div>
<div style="left:674px;top:17px;width:1px;height:305px;background:#e2e9f3"></div>
<div style="left:740px;top:17px;width:1px;height:305px;background:#e2e9f3"></div>
<div style="left:795px;top:17px;width:1px;height:305px;background:#e2e9f3"></div>
<div style="left:981px;top:17px;width:1px;height:305px;background:#e2e9f3"></div>
<div style="left:1045px;top:17px;width:1px;height:305px;background:#e2e9f3"></div>
<div style="left:1092px;top:17px;width:1px;height:305px;background:#e2e9f3"></div>
<div style="left:1187px;top:17px;width:1px;height:305px;background:#e2e9f3"></div>
<div style="left:1275px;top:17px;width:1px;height:305px;background:#e2e9f3"></div>
<div style="left:1370px;top:17px;width:1px;height:305px;background:#e2e9f3"></div>
<div style="left:1396px;top:17px;width:1px;height:305px;background:#e2e9f3"></div>
<div style="left:1508px;top:17px;width:1px;height:305px;background:#e2e9f3"></div>
<div style="left:1537px;top:17px;width:1px;height:305px;background:#e2e9f3"></div>
<div style="left:1649px;top:17px;width:1px;height:305px;background:#e2e9f3"></div>
<div style="left:1686px;top:17px;width:1px;height:305px;background:#e2e9f3"></div>
<div style="left:1777px;top:17px;width:1px;height:305px;background:#e2e9f3"></div>
<div style="left:1860px;top:17px;width:1px;height:305px;background:#e2e9f3"></div>
</div>
<div style="left:1896px;top:148px;width:17px;height:325px;background:#e8e8e8"></div>
<div style="left:1896px;top:162px;width:17px;height:64px;background:#c8c8c8"></div>
<svg style="left:1899px;top:151px" width="11" height="8" viewBox="0 0 11 8"><path d="M1.5 6 L5.5 2 L9.5 6" fill="none" stroke="#505050" stroke-width="1.3"/></svg>
<svg style="left:1899px;top:462px" width="11" height="8" viewBox="0 0 11 8"><path d="M1.5 2 L5.5 6 L9.5 2" fill="none" stroke="#505050" stroke-width="1.3"/></svg>
<div style="left:1px;top:473px;width:1912px;height:17px;background:#e8e8e8"></div>
<div style="left:1px;top:473px;width:10px;height:17px;background:#6b6b6b"></div>
<div style="left:25px;top:473px;width:829px;height:17px;background:#c8c8c8"></div>
<svg style="left:14px;top:477px" width="8" height="10" viewBox="0 0 8 10"><path d="M6 1 L2 5 L6 9" fill="none" stroke="#505050" stroke-width="1.3"/></svg>
<svg style="left:1885px;top:477px" width="8" height="10" viewBox="0 0 8 10"><path d="M2 1 L6 5 L2 9" fill="none" stroke="#505050" stroke-width="1.3"/></svg>
<div style="left:0px;top:497px;width:1915px;height:1px;background:#d0d0d0"></div>
<div style="left:1914px;top:497px;width:1px;height:450px;background:#d0d0d0"></div>
<div style="left:0px;top:946px;width:1915px;height:1px;background:#d0d0d0"></div>
<div style="left:1px;top:499px;width:1912px;height:17px;background:#0078d7"></div>
<div style="left:19px;top:500px;width:1px;height:16px;background:#dbe9f7"></div>
<div style="left:42px;top:500px;width:1px;height:16px;background:#dbe9f7"></div>
<div style="left:116px;top:500px;width:1px;height:16px;background:#dbe9f7"></div>
<div style="left:362px;top:500px;width:1px;height:16px;background:#dbe9f7"></div>
<div style="left:434px;top:500px;width:1px;height:16px;background:#dbe9f7"></div>
<div style="left:501px;top:500px;width:1px;height:16px;background:#dbe9f7"></div>
<div style="left:575px;top:500px;width:1px;height:16px;background:#dbe9f7"></div>
<div style="left:620px;top:500px;width:1px;height:16px;background:#dbe9f7"></div>
<div style="left:675px;top:500px;width:1px;height:16px;background:#dbe9f7"></div>
<div style="left:760px;top:500px;width:1px;height:16px;background:#dbe9f7"></div>
<div style="left:828px;top:500px;width:1px;height:16px;background:#dbe9f7"></div>
<div style="left:894px;top:500px;width:1px;height:16px;background:#dbe9f7"></div>
<div style="left:951px;top:500px;width:1px;height:16px;background:#dbe9f7"></div>
<div style="left:1049px;top:500px;width:1px;height:16px;background:#dbe9f7"></div>
<div style="left:1138px;top:500px;width:1px;height:16px;background:#dbe9f7"></div>
<div style="left:1230px;top:500px;width:1px;height:16px;background:#dbe9f7"></div>
<div style="left:1359px;top:500px;width:1px;height:16px;background:#dbe9f7"></div>
<div style="left:1477px;top:500px;width:1px;height:16px;background:#dbe9f7"></div>
<div style="left:1610px;top:500px;width:1px;height:16px;background:#dbe9f7"></div>
<div style="left:1724px;top:500px;width:1px;height:16px;background:#dbe9f7"></div>
<div class="t" style="left:43px;top:499.93px;font-size:12.3px;line-height:16px;color:#fff;width:73px;text-align:center;overflow:hidden;white-space:nowrap">Šifra</div>
<div class="t" style="left:117px;top:499.93px;font-size:12.3px;line-height:16px;color:#fff;width:245px;text-align:center;overflow:hidden;white-space:nowrap">Opis</div>
<div class="t" style="left:363px;top:499.93px;font-size:12.3px;line-height:16px;color:#fff;width:71px;text-align:center;overflow:hidden;white-space:nowrap">Količina</div>
<div class="t" style="left:435px;top:499.93px;font-size:12.3px;line-height:16px;color:#fff;width:66px;text-align:center;overflow:hidden;white-space:nowrap">Dev. cena</div>
<div class="t" style="left:502px;top:499.93px;font-size:12.3px;line-height:16px;color:#fff;width:73px;text-align:center;overflow:hidden;white-space:nowrap">Cena</div>
<div class="t" style="left:576px;top:499.93px;font-size:12.3px;line-height:16px;color:#fff;width:44px;text-align:center;overflow:hidden;white-space:nowrap">Rabat</div>
<div class="t" style="left:621px;top:499.93px;font-size:12.3px;line-height:16px;color:#fff;width:54px;text-align:center;overflow:hidden;white-space:nowrap">Tar.</div>
<div class="t" style="left:676px;top:499.93px;font-size:12.3px;line-height:16px;color:#fff;width:84px;text-align:center;overflow:hidden;white-space:nowrap">Vrednost</div>
<div class="t" style="left:761px;top:499.93px;font-size:12.3px;line-height:16px;color:#fff;width:67px;text-align:center;overflow:hidden;white-space:nowrap">Prof.c.</div>
<div class="t" style="left:829px;top:499.93px;font-size:12.3px;line-height:16px;color:#fff;width:65px;text-align:center;overflow:hidden;white-space:nowrap">Mesto tr.</div>
<div class="t" style="left:895px;top:499.93px;font-size:12.3px;line-height:16px;color:#fff;width:56px;text-align:center;overflow:hidden;white-space:nowrap">Rj Stavke</div>
<div class="t" style="left:952px;top:499.93px;font-size:12.3px;line-height:16px;color:#fff;width:97px;text-align:center;overflow:hidden;white-space:nowrap">Sifra Popdv</div>
<div class="t" style="left:1050px;top:499.93px;font-size:12.3px;line-height:16px;color:#fff;width:88px;text-align:center;overflow:hidden;white-space:nowrap">Sifra Epp</div>
<div class="t" style="left:1139px;top:499.93px;font-size:12.3px;line-height:16px;color:#fff;width:91px;text-align:center;overflow:hidden;white-space:nowrap">Pdv Kategorija</div>
<div class="t" style="left:1231px;top:499.93px;font-size:12.3px;line-height:16px;color:#fff;width:128px;text-align:center;overflow:hidden;white-space:nowrap">EFaktura Stopa Poreza</div>
<div class="t" style="left:1360px;top:499.93px;font-size:12.3px;line-height:16px;color:#fff;width:117px;text-align:center;overflow:hidden;white-space:nowrap">Kat. Sifra Dobavljaca</div>
<div class="t" style="left:1478px;top:499.93px;font-size:12.3px;line-height:16px;color:#fff;width:132px;text-align:center;overflow:hidden;white-space:nowrap">Klasifikacija Prometa</div>
<div class="t" style="left:1611px;top:499.93px;font-size:12.3px;line-height:16px;color:#fff;width:113px;text-align:center;overflow:hidden;white-space:nowrap">Promet Bez Naknade</div>
<div class="t" style="left:1725px;top:499.93px;font-size:12.3px;line-height:16px;color:#fff;width:85px;text-align:center;overflow:hidden;white-space:nowrap">Kljuc</div>
<div style="left:1px;top:536px;width:1912px;height:1px;background:#e2e9f3"></div>
<div style="left:1px;top:563px;width:1912px;height:1px;background:#e2e9f3"></div>
<div style="left:19px;top:516px;width:1px;height:47px;background:#e2e9f3"></div>
<div style="left:42px;top:516px;width:1px;height:47px;background:#e2e9f3"></div>
<div style="left:116px;top:516px;width:1px;height:47px;background:#e2e9f3"></div>
<div style="left:362px;top:516px;width:1px;height:47px;background:#e2e9f3"></div>
<div style="left:434px;top:516px;width:1px;height:47px;background:#e2e9f3"></div>
<div style="left:501px;top:516px;width:1px;height:47px;background:#e2e9f3"></div>
<div style="left:575px;top:516px;width:1px;height:47px;background:#e2e9f3"></div>
<div style="left:620px;top:516px;width:1px;height:47px;background:#e2e9f3"></div>
<div style="left:675px;top:516px;width:1px;height:47px;background:#e2e9f3"></div>
<div style="left:760px;top:516px;width:1px;height:47px;background:#e2e9f3"></div>
<div style="left:828px;top:516px;width:1px;height:47px;background:#e2e9f3"></div>
<div style="left:894px;top:516px;width:1px;height:47px;background:#e2e9f3"></div>
<div style="left:951px;top:516px;width:1px;height:47px;background:#e2e9f3"></div>
<div style="left:1049px;top:516px;width:1px;height:47px;background:#e2e9f3"></div>
<div style="left:1138px;top:516px;width:1px;height:47px;background:#e2e9f3"></div>
<div style="left:1230px;top:516px;width:1px;height:47px;background:#e2e9f3"></div>
<div style="left:1359px;top:516px;width:1px;height:47px;background:#e2e9f3"></div>
<div style="left:1477px;top:516px;width:1px;height:47px;background:#e2e9f3"></div>
<div style="left:1610px;top:516px;width:1px;height:47px;background:#e2e9f3"></div>
<div style="left:1724px;top:516px;width:1px;height:47px;background:#e2e9f3"></div>
<svg style="left:9px;top:522px" width="6" height="10" viewBox="0 0 6 10"><path d="M0 0 L5 4.5 L0 9 Z" fill="#000"/></svg>
<div class="t" style="left:20px;top:518.87px;font-size:12.5px;line-height:16px;color:#000;width:22px;overflow:hidden;white-space:nowrap">1</div>
<div class="t" style="left:43px;top:518.87px;font-size:12.5px;line-height:16px;color:#000;width:73px;overflow:hidden;white-space:nowrap">knjod</div>
<div class="t" style="left:117px;top:518.87px;font-size:12.5px;line-height:16px;color:#000;width:245px;overflow:hidden;white-space:nowrap">Knjizno odobrenje</div>
<div class="t" style="left:363px;top:518.87px;font-size:12.5px;line-height:16px;color:#000;width:71px;text-align:right;overflow:hidden;white-space:nowrap">1.000</div>
<div class="t" style="left:435px;top:518.87px;font-size:12.5px;line-height:16px;color:#000;width:66px;text-align:right;overflow:hidden;white-space:nowrap">0.00</div>
<div class="t" style="left:502px;top:518.87px;font-size:12.5px;line-height:16px;color:#000;width:73px;text-align:right;overflow:hidden;white-space:nowrap">-1000.0000</div>
<div class="t" style="left:576px;top:518.87px;font-size:12.5px;line-height:16px;color:#000;width:44px;text-align:right;overflow:hidden;white-space:nowrap">0</div>
<div class="t" style="left:621px;top:518.87px;font-size:12.5px;line-height:16px;color:#000;width:54px;text-align:center;overflow:hidden;white-space:nowrap">001</div>
<div class="t" style="left:676px;top:518.87px;font-size:12.5px;line-height:16px;color:#000;width:84px;text-align:right;overflow:hidden;white-space:nowrap">-1,200.00</div>
<div class="t" style="left:952px;top:518.87px;font-size:12.5px;line-height:16px;color:#000;width:97px;overflow:hidden;white-space:nowrap">3.6</div>
<div class="t" style="left:1050px;top:518.87px;font-size:12.5px;line-height:16px;color:#000;width:88px;overflow:hidden;white-space:nowrap">000</div>
<div class="t" style="left:1139px;top:518.87px;font-size:12.5px;line-height:16px;color:#000;width:91px;overflow:hidden;white-space:nowrap">S</div>
<div class="t" style="left:1231px;top:518.87px;font-size:12.5px;line-height:16px;color:#000;width:128px;text-align:right;overflow:hidden;white-space:nowrap">20.00</div>
<div class="t" style="left:1611px;top:518.87px;font-size:12.5px;line-height:16px;color:#000;width:113px;text-align:center;overflow:hidden;white-space:nowrap">0</div>
<div class="t" style="left:1726px;top:518.87px;font-size:12.5px;line-height:16px;color:#000;width:187px;overflow:hidden;white-space:nowrap">0</div>
<div class="t" style="left:502px;top:544.87px;font-size:12.5px;line-height:16px;color:#000;width:73px;text-align:right;overflow:hidden;white-space:nowrap">-1,000.00</div>
<div class="t" style="left:576px;top:544.87px;font-size:12.5px;line-height:16px;color:#000;width:44px;text-align:right;overflow:hidden;white-space:nowrap">0.00</div>
<div class="t" style="left:621px;top:544.87px;font-size:12.5px;line-height:16px;color:#000;width:54px;text-align:right;overflow:hidden;white-space:nowrap">-200.00</div>
<div class="t" style="left:676px;top:544.87px;font-size:12.5px;line-height:16px;color:#000;width:84px;text-align:right;overflow:hidden;white-space:nowrap">-1,200.00</div>
<div style="left:1px;top:931px;width:1912px;height:14px;background:#e8e8e8"></div>
<div style="left:15px;top:931px;width:1767px;height:14px;background:#c8c8c8"></div>
<svg style="left:5px;top:933px" width="7" height="10" viewBox="0 0 7 10"><path d="M5 1 L1.5 5 L5 9" fill="none" stroke="#505050" stroke-width="1.3"/></svg>
<svg style="left:1902px;top:933px" width="7" height="10" viewBox="0 0 7 10"><path d="M2 1 L5.5 5 L2 9" fill="none" stroke="#505050" stroke-width="1.3"/></svg>
<div class="t" style="left:468px;top:188.37px;font-size:14px;line-height:16px;color:#ff7f00;">2</div>
<div style="left:0px;top:949px;width:1917px;height:1px;background:#0078d7"></div>
<div style="left:0px;top:950px;width:1917px;height:1px;background:#ede8e4"></div>
<div style="left:0px;top:951px;width:1917px;height:16px;background:#e6e6e6"></div>
<div class="t" style="left:0.5px;top:952.17px;font-size:11.6px;line-height:16px;color:#000;">64</div>
</body></html>
